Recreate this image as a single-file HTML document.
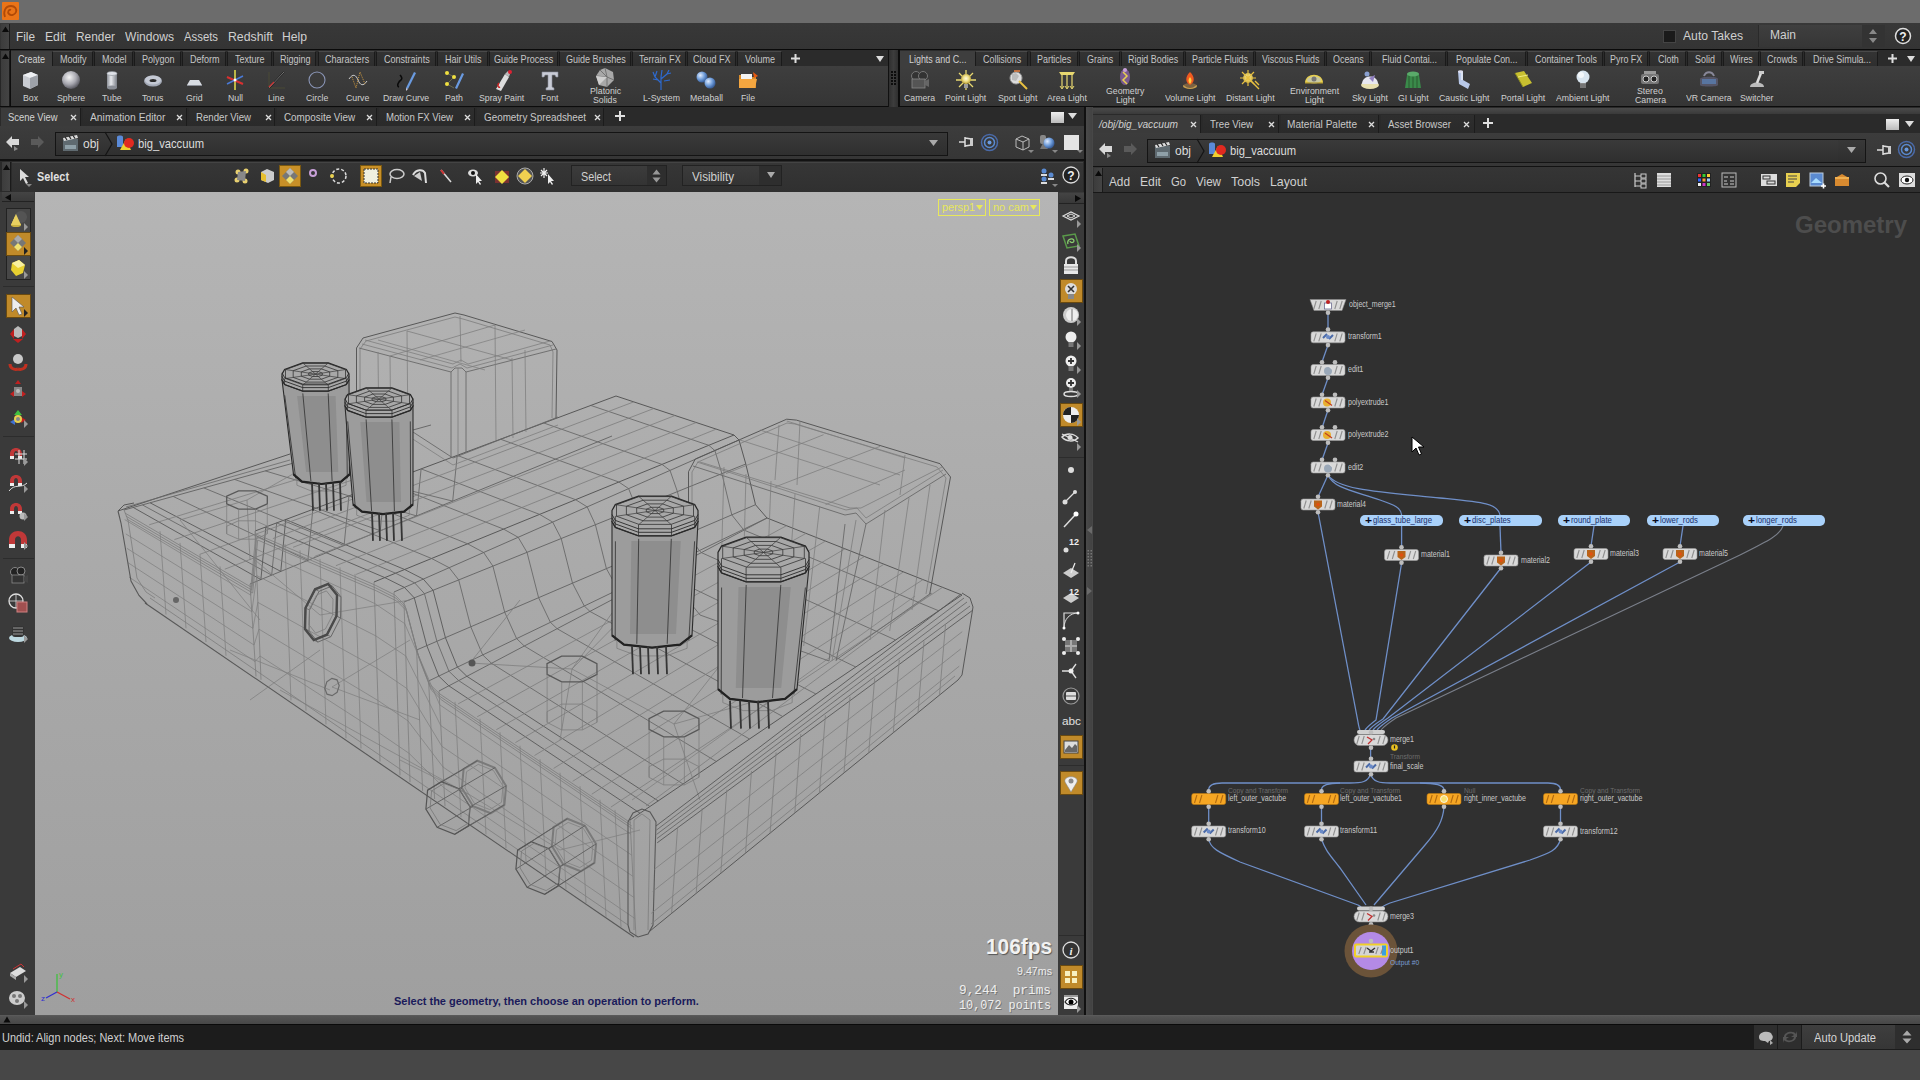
<!DOCTYPE html>
<html><head><meta charset="utf-8">
<style>
*{margin:0;padding:0;box-sizing:border-box}
html,body{width:1920px;height:1080px;overflow:hidden;background:#474747;font-family:"Liberation Sans",sans-serif;color:#cfcfcf}
.a{position:absolute}
.t{position:absolute;white-space:pre;line-height:1}
svg.a{overflow:visible}
</style></head><body>

<div class="a" style="left:0px;top:0px;width:1920px;height:23px;background:#6c6c6c;"></div>
<div class="a" style="left:2px;top:2px;width:17px;height:18px;background:#ea7418;border-radius:1px"></div><svg class="a" style="left:2px;top:2px" width="17" height="18" viewBox="0 0 17 18"><path d="M3 15 C1 10,3 4,9 4 C13 4,15 7,14 10 C13 13,9 14,7 12 C5 10,7 7,9 8" fill="none" stroke="#b04a08" stroke-width="1.8"/></svg>
<div class="a" style="left:0px;top:23px;width:1920px;height:26px;background:linear-gradient(#383838,#343434);"></div>
<div class="a" style="left:0px;top:49px;width:1920px;height:2px;background:#0a0a0a;"></div>
<div class="a" style="left:1px;top:24px;width:9px;height:25px;background:linear-gradient(90deg,#3c3c3c,#444);border-right:1px solid #1a1a1a"></div><svg class="a" style="left:1px;top:26px" width="9" height="7"><path d="M1 6 L4.5 0.5 L8 6Z" fill="#0a0a0a"/></svg>
<div class="t" style="left:16.0px;top:30.0px;font-size:13px;color:#d0d0d0;transform:scaleX(0.907);transform-origin:0 0;">File</div>
<div class="t" style="left:45.0px;top:30.0px;font-size:13px;color:#d0d0d0;transform:scaleX(0.937);transform-origin:0 0;">Edit</div>
<div class="t" style="left:76.0px;top:30.0px;font-size:13px;color:#d0d0d0;transform:scaleX(0.915);transform-origin:0 0;">Render</div>
<div class="t" style="left:125.0px;top:30.0px;font-size:13px;color:#d0d0d0;transform:scaleX(0.929);transform-origin:0 0;">Windows</div>
<div class="t" style="left:184.0px;top:30.0px;font-size:13px;color:#d0d0d0;transform:scaleX(0.871);transform-origin:0 0;">Assets</div>
<div class="t" style="left:228.0px;top:30.0px;font-size:13px;color:#d0d0d0;transform:scaleX(0.944);transform-origin:0 0;">Redshift</div>
<div class="t" style="left:282.0px;top:30.0px;font-size:13px;color:#d0d0d0;transform:scaleX(0.935);transform-origin:0 0;">Help</div>
<div class="a" style="left:1663px;top:30px;width:13px;height:13px;background:#1a1a1a;border:1px solid #444"></div>
<div class="t" style="left:1683.0px;top:30.4px;font-size:12.5px;color:#d0d0d0;transform:scaleX(0.974);transform-origin:0 0;">Auto Takes</div>
<div class="a" style="left:1758px;top:25px;width:127px;height:22px;background:linear-gradient(#3f3f3f,#363636);border-left:1px solid #2a2a2a"></div>
<div class="a" style="left:1862px;top:25px;width:23px;height:22px;background:#333;"></div>
<div class="t" style="left:1770.0px;top:29.4px;font-size:12.5px;color:#d0d0d0;transform:scaleX(0.960);transform-origin:0 0;">Main</div>
<svg class="a" style="left:1868px;top:28px" width="10" height="16"><path d="M1 6 L5 1 L9 6Z M1 10 L5 15 L9 10Z" fill="#888"/></svg>
<svg class="a" style="left:1894px;top:27px" width="18" height="18"><circle cx="9" cy="9" r="7.5" fill="#222" stroke="#ddd" stroke-width="1.5"/><text x="9" y="13.5" font-size="12" font-weight="bold" text-anchor="middle" fill="#eee" font-family="Liberation Sans">?</text></svg>
<div class="a" style="left:0px;top:50px;width:1920px;height:57px;background:#262626;"></div>
<div class="a" style="left:0px;top:106px;width:1920px;height:1px;background:#0c0c0c;"></div>
<div class="a" style="left:1px;top:51px;width:9px;height:55px;background:linear-gradient(90deg,#3c3c3c,#444);border-right:1px solid #1a1a1a"></div><svg class="a" style="left:1px;top:53px" width="9" height="7"><path d="M1 6 L4.5 0.5 L8 6Z" fill="#0a0a0a"/></svg>
<div class="a" style="left:10px;top:50px;width:1px;height:56px;background:#0c0c0c;"></div>
<div class="a" style="left:11px;top:66px;width:877px;height:40px;background:linear-gradient(#3e3e3e,#353535);"></div>
<div class="a" style="left:11px;top:50px;width:877px;height:16px;background:#2b2b2b;"></div>
<div class="a" style="left:11px;top:51px;width:41px;height:16px;background:#3e3e3e;"></div>
<div class="t" style="left:17.9px;top:54.1px;font-size:10.5px;color:#d2d2d2;transform:scaleX(0.860);transform-origin:0 0;">Create</div>
<div class="a" style="left:52px;top:51px;width:41px;height:15px;background:linear-gradient(#333,#2e2e2e);border:1px solid #1a1a1a;border-top:1px solid #4a4a4a;border-bottom:none"></div>
<div class="t" style="left:59.7px;top:54.1px;font-size:10.5px;color:#c6c6c6;transform:scaleX(0.860);transform-origin:0 0;">Modify</div>
<div class="a" style="left:94px;top:51px;width:39px;height:15px;background:linear-gradient(#333,#2e2e2e);border:1px solid #1a1a1a;border-top:1px solid #4a4a4a;border-bottom:none"></div>
<div class="t" style="left:101.7px;top:54.1px;font-size:10.5px;color:#c6c6c6;transform:scaleX(0.860);transform-origin:0 0;">Model</div>
<div class="a" style="left:134px;top:51px;width:47px;height:15px;background:linear-gradient(#333,#2e2e2e);border:1px solid #1a1a1a;border-top:1px solid #4a4a4a;border-bottom:none"></div>
<div class="t" style="left:141.7px;top:54.1px;font-size:10.5px;color:#c6c6c6;transform:scaleX(0.860);transform-origin:0 0;">Polygon</div>
<div class="a" style="left:182px;top:51px;width:44px;height:15px;background:linear-gradient(#333,#2e2e2e);border:1px solid #1a1a1a;border-top:1px solid #4a4a4a;border-bottom:none"></div>
<div class="t" style="left:189.7px;top:54.1px;font-size:10.5px;color:#c6c6c6;transform:scaleX(0.860);transform-origin:0 0;">Deform</div>
<div class="a" style="left:227px;top:51px;width:45px;height:15px;background:linear-gradient(#333,#2e2e2e);border:1px solid #1a1a1a;border-top:1px solid #4a4a4a;border-bottom:none"></div>
<div class="t" style="left:235.2px;top:54.1px;font-size:10.5px;color:#c6c6c6;transform:scaleX(0.860);transform-origin:0 0;">Texture</div>
<div class="a" style="left:273px;top:51px;width:43px;height:15px;background:linear-gradient(#333,#2e2e2e);border:1px solid #1a1a1a;border-top:1px solid #4a4a4a;border-bottom:none"></div>
<div class="t" style="left:279.7px;top:54.1px;font-size:10.5px;color:#c6c6c6;transform:scaleX(0.860);transform-origin:0 0;">Rigging</div>
<div class="a" style="left:318px;top:51px;width:57px;height:15px;background:linear-gradient(#333,#2e2e2e);border:1px solid #1a1a1a;border-top:1px solid #4a4a4a;border-bottom:none"></div>
<div class="t" style="left:324.9px;top:54.1px;font-size:10.5px;color:#c6c6c6;transform:scaleX(0.860);transform-origin:0 0;">Characters</div>
<div class="a" style="left:376px;top:51px;width:60px;height:15px;background:linear-gradient(#333,#2e2e2e);border:1px solid #1a1a1a;border-top:1px solid #4a4a4a;border-bottom:none"></div>
<div class="t" style="left:383.7px;top:54.1px;font-size:10.5px;color:#c6c6c6;transform:scaleX(0.860);transform-origin:0 0;">Constraints</div>
<div class="a" style="left:437px;top:51px;width:51px;height:15px;background:linear-gradient(#333,#2e2e2e);border:1px solid #1a1a1a;border-top:1px solid #4a4a4a;border-bottom:none"></div>
<div class="t" style="left:444.7px;top:54.1px;font-size:10.5px;color:#c6c6c6;transform:scaleX(0.860);transform-origin:0 0;">Hair Utils</div>
<div class="a" style="left:489px;top:51px;width:69px;height:15px;background:linear-gradient(#333,#2e2e2e);border:1px solid #1a1a1a;border-top:1px solid #4a4a4a;border-bottom:none"></div>
<div class="t" style="left:494.4px;top:54.1px;font-size:10.5px;color:#c6c6c6;transform:scaleX(0.860);transform-origin:0 0;">Guide Process</div>
<div class="a" style="left:559px;top:51px;width:72px;height:15px;background:linear-gradient(#333,#2e2e2e);border:1px solid #1a1a1a;border-top:1px solid #4a4a4a;border-bottom:none"></div>
<div class="t" style="left:565.6px;top:54.1px;font-size:10.5px;color:#c6c6c6;transform:scaleX(0.860);transform-origin:0 0;">Guide Brushes</div>
<div class="a" style="left:632px;top:51px;width:54px;height:15px;background:linear-gradient(#333,#2e2e2e);border:1px solid #1a1a1a;border-top:1px solid #4a4a4a;border-bottom:none"></div>
<div class="t" style="left:638.7px;top:54.1px;font-size:10.5px;color:#c6c6c6;transform:scaleX(0.860);transform-origin:0 0;">Terrain FX</div>
<div class="a" style="left:687px;top:51px;width:49px;height:15px;background:linear-gradient(#333,#2e2e2e);border:1px solid #1a1a1a;border-top:1px solid #4a4a4a;border-bottom:none"></div>
<div class="t" style="left:693.2px;top:54.1px;font-size:10.5px;color:#c6c6c6;transform:scaleX(0.860);transform-origin:0 0;">Cloud FX</div>
<div class="a" style="left:737px;top:51px;width:45px;height:15px;background:linear-gradient(#333,#2e2e2e);border:1px solid #1a1a1a;border-top:1px solid #4a4a4a;border-bottom:none"></div>
<div class="t" style="left:744.9px;top:54.1px;font-size:10.5px;color:#c6c6c6;transform:scaleX(0.860);transform-origin:0 0;">Volume</div>
<svg class="a" style="left:790px;top:53px" width="11" height="11"><path d="M5.5 1V10M1 5.5H10" stroke="#ddd" stroke-width="2"/></svg>
<svg class="a" style="left:875px;top:55px" width="10" height="8"><path d="M1 1H9L5 7Z" fill="#ddd"/></svg>
<div class="a" style="left:888px;top:50px;width:10px;height:57px;background:linear-gradient(90deg,#2f2f2f,#3d3d3d,#2f2f2f);border-left:1px solid #111"></div>
<svg class="a" style="left:890px;top:70px" width="7" height="16"><rect x="1" y="1" width="2" height="2" fill="#0c0c0c"/><rect x="1" y="4" width="2" height="2" fill="#0c0c0c"/><rect x="1" y="7" width="2" height="2" fill="#0c0c0c"/><rect x="1" y="10" width="2" height="2" fill="#0c0c0c"/><rect x="1" y="13" width="2" height="2" fill="#0c0c0c"/><rect x="4" y="1" width="2" height="2" fill="#0c0c0c"/><rect x="4" y="4" width="2" height="2" fill="#0c0c0c"/><rect x="4" y="7" width="2" height="2" fill="#0c0c0c"/><rect x="4" y="10" width="2" height="2" fill="#0c0c0c"/><rect x="4" y="13" width="2" height="2" fill="#0c0c0c"/></svg>
<div class="a" style="left:898px;top:50px;width:2px;height:57px;background:#0c0c0c;"></div>
<div class="a" style="left:900px;top:66px;width:1020px;height:40px;background:linear-gradient(#3e3e3e,#353535);"></div>
<div class="a" style="left:900px;top:50px;width:1020px;height:16px;background:#2b2b2b;"></div>
<div class="a" style="left:900px;top:51px;width:75px;height:16px;background:#3e3e3e;"></div>
<div class="t" style="left:908.7px;top:54.1px;font-size:10.5px;color:#d2d2d2;transform:scaleX(0.850);transform-origin:0 0;">Lights and C...</div>
<div class="a" style="left:975px;top:51px;width:53px;height:15px;background:linear-gradient(#333,#2e2e2e);border:1px solid #1a1a1a;border-top:1px solid #4a4a4a;border-bottom:none"></div>
<div class="t" style="left:982.9px;top:54.1px;font-size:10.5px;color:#c6c6c6;transform:scaleX(0.850);transform-origin:0 0;">Collisions</div>
<div class="a" style="left:1030px;top:51px;width:48px;height:15px;background:linear-gradient(#333,#2e2e2e);border:1px solid #1a1a1a;border-top:1px solid #4a4a4a;border-bottom:none"></div>
<div class="t" style="left:1037.4px;top:54.1px;font-size:10.5px;color:#c6c6c6;transform:scaleX(0.850);transform-origin:0 0;">Particles</div>
<div class="a" style="left:1079px;top:51px;width:41px;height:15px;background:linear-gradient(#333,#2e2e2e);border:1px solid #1a1a1a;border-top:1px solid #4a4a4a;border-bottom:none"></div>
<div class="t" style="left:1086.9px;top:54.1px;font-size:10.5px;color:#c6c6c6;transform:scaleX(0.850);transform-origin:0 0;">Grains</div>
<div class="a" style="left:1121px;top:51px;width:63px;height:15px;background:linear-gradient(#333,#2e2e2e);border:1px solid #1a1a1a;border-top:1px solid #4a4a4a;border-bottom:none"></div>
<div class="t" style="left:1127.9px;top:54.1px;font-size:10.5px;color:#c6c6c6;transform:scaleX(0.850);transform-origin:0 0;">Rigid Bodies</div>
<div class="a" style="left:1185px;top:51px;width:69px;height:15px;background:linear-gradient(#333,#2e2e2e);border:1px solid #1a1a1a;border-top:1px solid #4a4a4a;border-bottom:none"></div>
<div class="t" style="left:1192.0px;top:54.1px;font-size:10.5px;color:#c6c6c6;transform:scaleX(0.850);transform-origin:0 0;">Particle Fluids</div>
<div class="a" style="left:1255px;top:51px;width:70px;height:15px;background:linear-gradient(#333,#2e2e2e);border:1px solid #1a1a1a;border-top:1px solid #4a4a4a;border-bottom:none"></div>
<div class="t" style="left:1261.8px;top:54.1px;font-size:10.5px;color:#c6c6c6;transform:scaleX(0.850);transform-origin:0 0;">Viscous Fluids</div>
<div class="a" style="left:1326px;top:51px;width:44px;height:15px;background:linear-gradient(#333,#2e2e2e);border:1px solid #1a1a1a;border-top:1px solid #4a4a4a;border-bottom:none"></div>
<div class="t" style="left:1333.1px;top:54.1px;font-size:10.5px;color:#c6c6c6;transform:scaleX(0.850);transform-origin:0 0;">Oceans</div>
<div class="a" style="left:1371px;top:51px;width:75px;height:15px;background:linear-gradient(#333,#2e2e2e);border:1px solid #1a1a1a;border-top:1px solid #4a4a4a;border-bottom:none"></div>
<div class="t" style="left:1381.5px;top:54.1px;font-size:10.5px;color:#c6c6c6;transform:scaleX(0.850);transform-origin:0 0;">Fluid Contai...</div>
<div class="a" style="left:1447px;top:51px;width:79px;height:15px;background:linear-gradient(#333,#2e2e2e);border:1px solid #1a1a1a;border-top:1px solid #4a4a4a;border-bottom:none"></div>
<div class="t" style="left:1456.2px;top:54.1px;font-size:10.5px;color:#c6c6c6;transform:scaleX(0.850);transform-origin:0 0;">Populate Con...</div>
<div class="a" style="left:1527px;top:51px;width:76px;height:15px;background:linear-gradient(#333,#2e2e2e);border:1px solid #1a1a1a;border-top:1px solid #4a4a4a;border-bottom:none"></div>
<div class="t" style="left:1534.6px;top:54.1px;font-size:10.5px;color:#c6c6c6;transform:scaleX(0.850);transform-origin:0 0;">Container Tools</div>
<div class="a" style="left:1604px;top:51px;width:44px;height:15px;background:linear-gradient(#333,#2e2e2e);border:1px solid #1a1a1a;border-top:1px solid #4a4a4a;border-bottom:none"></div>
<div class="t" style="left:1610.4px;top:54.1px;font-size:10.5px;color:#c6c6c6;transform:scaleX(0.850);transform-origin:0 0;">Pyro FX</div>
<div class="a" style="left:1649px;top:51px;width:37px;height:15px;background:linear-gradient(#333,#2e2e2e);border:1px solid #1a1a1a;border-top:1px solid #4a4a4a;border-bottom:none"></div>
<div class="t" style="left:1657.6px;top:54.1px;font-size:10.5px;color:#c6c6c6;transform:scaleX(0.850);transform-origin:0 0;">Cloth</div>
<div class="a" style="left:1687px;top:51px;width:35px;height:15px;background:linear-gradient(#333,#2e2e2e);border:1px solid #1a1a1a;border-top:1px solid #4a4a4a;border-bottom:none"></div>
<div class="t" style="left:1695.1px;top:54.1px;font-size:10.5px;color:#c6c6c6;transform:scaleX(0.850);transform-origin:0 0;">Solid</div>
<div class="a" style="left:1723px;top:51px;width:36px;height:15px;background:linear-gradient(#333,#2e2e2e);border:1px solid #1a1a1a;border-top:1px solid #4a4a4a;border-bottom:none"></div>
<div class="t" style="left:1730.1px;top:54.1px;font-size:10.5px;color:#c6c6c6;transform:scaleX(0.850);transform-origin:0 0;">Wires</div>
<div class="a" style="left:1760px;top:51px;width:43px;height:15px;background:linear-gradient(#333,#2e2e2e);border:1px solid #1a1a1a;border-top:1px solid #4a4a4a;border-bottom:none"></div>
<div class="t" style="left:1766.9px;top:54.1px;font-size:10.5px;color:#c6c6c6;transform:scaleX(0.850);transform-origin:0 0;">Crowds</div>
<div class="a" style="left:1804px;top:51px;width:74px;height:15px;background:linear-gradient(#333,#2e2e2e);border:1px solid #1a1a1a;border-top:1px solid #4a4a4a;border-bottom:none"></div>
<div class="t" style="left:1812.5px;top:54.1px;font-size:10.5px;color:#c6c6c6;transform:scaleX(0.850);transform-origin:0 0;">Drive Simula...</div>
<svg class="a" style="left:1887px;top:53px" width="11" height="11"><path d="M5.5 1V10M1 5.5H10" stroke="#ddd" stroke-width="2"/></svg>
<svg class="a" style="left:1906px;top:55px" width="10" height="8"><path d="M1 1H9L5 7Z" fill="#ddd"/></svg>
<svg width="0" height="0" style="position:absolute"><defs>
<radialGradient id="gsph" cx="40%" cy="35%" r="65%"><stop offset="0" stop-color="#f4f4f4"/><stop offset="0.6" stop-color="#a8a8b0"/><stop offset="1" stop-color="#5a5a62"/></radialGradient>
<linearGradient id="gcyl" x1="0" x2="1"><stop offset="0" stop-color="#8a8e96"/><stop offset="0.4" stop-color="#e8eaee"/><stop offset="1" stop-color="#7a7e86"/></linearGradient>
<radialGradient id="gblue" cx="35%" cy="35%" r="65%"><stop offset="0" stop-color="#e0ecff"/><stop offset="0.6" stop-color="#6c9ad8"/><stop offset="1" stop-color="#3a5f9a"/></radialGradient>
<radialGradient id="gyel" cx="50%" cy="45%" r="55%"><stop offset="0" stop-color="#fffbe0"/><stop offset="0.5" stop-color="#efe08a"/><stop offset="1" stop-color="#b79b30"/></radialGradient>
</defs></svg>
<svg class="a" style="left:19px;top:69px" width="22" height="22" viewBox="0 0 22 22"><path d="M4 6 L12 3 L19 6 L19 16 L11 20 L4 17Z" fill="#c9ccd2"/><path d="M4 6 L12 3 L19 6 L11 9Z" fill="#eef0f3"/><path d="M11 9 L19 6 L19 16 L11 20Z" fill="#9da1a8"/></svg>
<div class="t" style="left:22.5px;top:93.0px;font-size:9.5px;color:#d0d0d0;transform:scaleX(0.920);transform-origin:0 0;">Box</div>
<svg class="a" style="left:60px;top:69px" width="22" height="22" viewBox="0 0 22 22"><circle cx="11" cy="11" r="9" fill="url(#gsph)"/></svg>
<div class="t" style="left:56.9px;top:93.0px;font-size:9.5px;color:#d0d0d0;transform:scaleX(0.920);transform-origin:0 0;">Sphere</div>
<svg class="a" style="left:101px;top:69px" width="22" height="22" viewBox="0 0 22 22"><rect x="6" y="4" width="10" height="15" rx="1" fill="url(#gcyl)"/><ellipse cx="11" cy="4.5" rx="5" ry="2" fill="#dfe2e8" stroke="#8a8e96" stroke-width="0.6"/><ellipse cx="11" cy="18.5" rx="5" ry="2" fill="#8a8e96"/></svg>
<div class="t" style="left:102.2px;top:93.0px;font-size:9.5px;color:#d0d0d0;transform:scaleX(0.920);transform-origin:0 0;">Tube</div>
<svg class="a" style="left:142px;top:69px" width="22" height="22" viewBox="0 0 22 22"><ellipse cx="11" cy="12" rx="9" ry="5.5" fill="#a3a9b6"/><ellipse cx="11" cy="11" rx="8" ry="4.5" fill="#c4c9d4"/><ellipse cx="11" cy="11.5" rx="3.5" ry="1.6" fill="#2a2a2a"/></svg>
<div class="t" style="left:142.3px;top:93.0px;font-size:9.5px;color:#d0d0d0;transform:scaleX(0.920);transform-origin:0 0;">Torus</div>
<svg class="a" style="left:183px;top:69px" width="22" height="22" viewBox="0 0 22 22"><path d="M4 16 L7 11 L16 11 L19 16Z" fill="#d8dce2"/><path d="M4 16 L19 16 L19 17 L4 17Z" fill="#8a8e96"/></svg>
<div class="t" style="left:185.7px;top:93.0px;font-size:9.5px;color:#d0d0d0;transform:scaleX(0.920);transform-origin:0 0;">Grid</div>
<svg class="a" style="left:224px;top:69px" width="22" height="22" viewBox="0 0 22 22"><path d="M11 1V21" stroke="#e8e04a" stroke-width="1.5"/><path d="M3 8 L19 15" stroke="#d83030" stroke-width="2"/><path d="M3 15 L19 7" stroke="#4a7ad8" stroke-width="1.5"/><circle cx="11" cy="11" r="1.5" fill="#fff"/></svg>
<div class="t" style="left:227.5px;top:93.0px;font-size:9.5px;color:#d0d0d0;transform:scaleX(0.920);transform-origin:0 0;">Null</div>
<svg class="a" style="left:265px;top:69px" width="22" height="22" viewBox="0 0 22 22"><path d="M4 19 H20 M4 19 V3" stroke="#553" stroke-width="0.6"/><path d="M4 19 L19 3" stroke="#111" stroke-width="1.6"/><path d="M4 19 L19 3" stroke="#ddd" stroke-width="0.5"/><path d="M4 18 L9 13" stroke="#c33" stroke-width="1.2"/></svg>
<div class="t" style="left:267.7px;top:93.0px;font-size:9.5px;color:#d0d0d0;transform:scaleX(0.920);transform-origin:0 0;">Line</div>
<svg class="a" style="left:306px;top:69px" width="22" height="22" viewBox="0 0 22 22"><circle cx="11" cy="11" r="8" fill="none" stroke="#8a95b6" stroke-width="1.1"/></svg>
<div class="t" style="left:305.8px;top:93.0px;font-size:9.5px;color:#d0d0d0;transform:scaleX(0.920);transform-origin:0 0;">Circle</div>
<svg class="a" style="left:347px;top:69px" width="22" height="22" viewBox="0 0 22 22"><path d="M2 10 C6 4,9 6,11 11 C13 16,16 18,20 12" fill="none" stroke="#ccc" stroke-width="1"/><path d="M5 8 L9 19 L13 3 L18 15" fill="none" stroke="#d9a040" stroke-width="0.9" stroke-dasharray="1 1"/></svg>
<div class="t" style="left:346.3px;top:93.0px;font-size:9.5px;color:#d0d0d0;transform:scaleX(0.920);transform-origin:0 0;">Curve</div>
<svg class="a" style="left:395px;top:69px" width="22" height="22" viewBox="0 0 22 22"><path d="M4 18 C1 17,4 12,6 11 C8 10,6 7,5 6" fill="none" stroke="#0a0a0a" stroke-width="1.6"/><path d="M11 19 L19 3 L21 4 L13 20Z" fill="#6a9ae0"/><path d="M11 19 L13 20 L11 22Z" fill="#ccd"/></svg>
<div class="t" style="left:382.9px;top:93.0px;font-size:9.5px;color:#d0d0d0;transform:scaleX(0.920);transform-origin:0 0;">Draw Curve</div>
<svg class="a" style="left:443px;top:69px" width="22" height="22" viewBox="0 0 22 22"><path d="M4 4 L11 8 L4 15 L11 19" fill="none" stroke="#775" stroke-width="0.8"/><circle cx="4" cy="4" r="2" fill="#f0e040"/><circle cx="11" cy="8" r="2" fill="#f0e040"/><circle cx="4" cy="15" r="2" fill="#f0e040"/><path d="M12 19 L19 4 L21 5 L14 20Z" fill="#6a9ae0"/></svg>
<div class="t" style="left:445.0px;top:93.0px;font-size:9.5px;color:#d0d0d0;transform:scaleX(0.920);transform-origin:0 0;">Path</div>
<svg class="a" style="left:491px;top:69px" width="22" height="22" viewBox="0 0 22 22"><path d="M5 20 L14 5 L18 8 L10 22Z" fill="#ddd"/><path d="M8 14 C6 16,7 19,9 18" fill="none" stroke="#c22" stroke-width="1.5"/><path d="M14 5 L17 2 L19 5 L18 8Z" fill="#bbb"/><circle cx="19" cy="3" r="2" fill="#d23"/></svg>
<div class="t" style="left:479.4px;top:93.0px;font-size:9.5px;color:#d0d0d0;transform:scaleX(0.920);transform-origin:0 0;">Spray Paint</div>
<svg class="a" style="left:539px;top:69px" width="22" height="22" viewBox="0 0 22 22"><path d="M3 3 H19 V8 H17 L16 6 H13 V18 L15 19 V21 H7 V19 L9 18 V6 H6 L5 8 H3Z" fill="#c9ccd6" stroke="#8a8e9a" stroke-width="0.6"/></svg>
<div class="t" style="left:541.3px;top:93.0px;font-size:9.5px;color:#d0d0d0;transform:scaleX(0.920);transform-origin:0 0;">Font</div>
<svg class="a" style="left:594px;top:67px" width="22" height="22" viewBox="0 0 22 22"><path d="M11 1 L19 5 L20 13 L13 20 L5 18 L2 9 L6 3Z" fill="#a8a8a8"/><path d="M11 1 L13 10 L2 9 M13 10 L20 13 M13 10 L13 20 M6 3 L13 10" stroke="#666" stroke-width="0.8" fill="none"/><path d="M2 9 L13 10 L5 18Z" fill="#cfcfcf"/></svg>
<div class="t" style="left:589.5px;top:86.0px;font-size:9.5px;color:#d0d0d0;transform:scaleX(0.920);transform-origin:0 0;">Platonic</div>
<div class="t" style="left:593.1px;top:95.0px;font-size:9.5px;color:#d0d0d0;transform:scaleX(0.920);transform-origin:0 0;">Solids</div>
<svg class="a" style="left:650px;top:69px" width="22" height="22" viewBox="0 0 22 22"><path d="M11 21 V8 M11 14 L5 8 L3 3 M5 8 L7 2 M11 10 L17 5 L19 1 M17 5 L21 4 M11 8 L12 1 M8 11 L3 10 M14 12 L20 11" fill="none" stroke="#2d6ad0" stroke-width="1.2"/></svg>
<div class="t" style="left:642.5px;top:93.0px;font-size:9.5px;color:#d0d0d0;transform:scaleX(0.920);transform-origin:0 0;">L-System</div>
<svg class="a" style="left:695px;top:69px" width="22" height="22" viewBox="0 0 22 22"><circle cx="7" cy="8" r="5.5" fill="url(#gblue)"/><circle cx="15" cy="14" r="5.5" fill="url(#gblue)"/></svg>
<div class="t" style="left:689.5px;top:93.0px;font-size:9.5px;color:#d0d0d0;transform:scaleX(0.920);transform-origin:0 0;">Metaball</div>
<svg class="a" style="left:737px;top:69px" width="22" height="22" viewBox="0 0 22 22"><path d="M2 6 H9 L11 8 H19 V19 H2Z" fill="#d98c2c"/><path d="M4 5 H15 V15 H4Z" fill="#f2f2f2"/><path d="M2 10 H20 L18 19 H2Z" fill="#f4a640"/><path d="M16 3 L21 7 L17 9Z" fill="#e85a10"/></svg>
<div class="t" style="left:741.0px;top:93.0px;font-size:9.5px;color:#d0d0d0;transform:scaleX(0.920);transform-origin:0 0;">File</div>
<svg class="a" style="left:908px;top:69px" width="22" height="22" viewBox="0 0 22 22"><circle cx="8" cy="7" r="4.5" fill="#333" stroke="#777" stroke-width="1"/><circle cx="15" cy="7" r="4.5" fill="#333" stroke="#777" stroke-width="1"/><rect x="4" y="10" width="13" height="9" fill="#555" stroke="#888" stroke-width="0.8"/><path d="M17 12 L21 10 V18 L17 16Z" fill="#666"/></svg>
<div class="t" style="left:903.5px;top:93.0px;font-size:9.5px;color:#d0d0d0;transform:scaleX(0.920);transform-origin:0 0;">Camera</div>
<svg class="a" style="left:955px;top:69px" width="22" height="22" viewBox="0 0 22 22"><path d="M11 1 V21 M1 11 H21 M4 4 L18 18 M18 4 L4 18" stroke="#e8d870" stroke-width="1.3"/><circle cx="11" cy="10" r="5" fill="url(#gyel)"/><rect x="9" y="15" width="4" height="4" fill="#999"/></svg>
<div class="t" style="left:945.3px;top:93.0px;font-size:9.5px;color:#d0d0d0;transform:scaleX(0.920);transform-origin:0 0;">Point Light</div>
<svg class="a" style="left:1007px;top:69px" width="22" height="22" viewBox="0 0 22 22"><circle cx="9" cy="9" r="6" fill="#ddd" stroke="#999"/><path d="M5 5 L9 4 L12 7 L9 12 L5 11Z" fill="#bbb"/><path d="M12 12 L20 20" stroke="#e8c040" stroke-width="2"/><path d="M7 2 L13 2" stroke="#e88040" stroke-width="1.5"/></svg>
<div class="t" style="left:998.3px;top:93.0px;font-size:9.5px;color:#d0d0d0;transform:scaleX(0.920);transform-origin:0 0;">Spot Light</div>
<svg class="a" style="left:1056px;top:69px" width="22" height="22" viewBox="0 0 22 22"><path d="M3 3 H19 L17 6 H5Z" fill="#e8d870"/><path d="M6 6 V19 M11 6 V19 M16 6 V19" stroke="#e8d870" stroke-width="1.2"/><path d="M4 17 L6 20 L8 17 M9 17 L11 20 L13 17 M14 17 L16 20 L18 17" fill="none" stroke="#e8d870" stroke-width="1"/></svg>
<div class="t" style="left:1047.1px;top:93.0px;font-size:9.5px;color:#d0d0d0;transform:scaleX(0.920);transform-origin:0 0;">Area Light</div>
<svg class="a" style="left:1114px;top:67px" width="22" height="22" viewBox="0 0 22 22"><ellipse cx="11" cy="10" rx="5" ry="8" fill="#7a5a90"/><path d="M9 5 L13 9 L9 13 L13 17" stroke="#e8d050" stroke-width="1.5" fill="none"/><circle cx="11" cy="3" r="2" fill="#c8a0d8"/></svg>
<div class="t" style="left:1105.8px;top:86.0px;font-size:9.5px;color:#d0d0d0;transform:scaleX(0.920);transform-origin:0 0;">Geometry</div>
<div class="t" style="left:1115.5px;top:95.0px;font-size:9.5px;color:#d0d0d0;transform:scaleX(0.920);transform-origin:0 0;">Light</div>
<svg class="a" style="left:1179px;top:69px" width="22" height="22" viewBox="0 0 22 22"><ellipse cx="11" cy="17" rx="7" ry="3" fill="#c8a050"/><circle cx="11" cy="11" r="8" fill="#4a3a3a" opacity="0.6"/><path d="M11 3 C16 8,16 13,11 16 C6 13,6 8,11 3Z" fill="#f05a20"/><path d="M11 8 C13 10,13 13,11 15 C9 13,9 10,11 8Z" fill="#ffd040"/></svg>
<div class="t" style="left:1164.7px;top:93.0px;font-size:9.5px;color:#d0d0d0;transform:scaleX(0.920);transform-origin:0 0;">Volume Light</div>
<svg class="a" style="left:1239px;top:69px" width="22" height="22" viewBox="0 0 22 22"><circle cx="9" cy="9" r="5" fill="url(#gyel)"/><path d="M9 1 V17 M1 9 H17 M3 3 L15 15 M15 3 L3 15" stroke="#e8c040" stroke-width="1.2"/><path d="M12 12 L20 20 M16 12 L20 16" stroke="#e8c040" stroke-width="1.4"/></svg>
<div class="t" style="left:1225.7px;top:93.0px;font-size:9.5px;color:#d0d0d0;transform:scaleX(0.920);transform-origin:0 0;">Distant Light</div>
<svg class="a" style="left:1303px;top:67px" width="22" height="22" viewBox="0 0 22 22"><path d="M2 16 C2 5,20 5,20 16Z" fill="#e8d050"/><ellipse cx="11" cy="13" rx="7" ry="3.5" fill="#c8c8a0"/><circle cx="11" cy="12" r="2.5" fill="#777"/><path d="M2 16 H20" stroke="#a89030" stroke-width="1.2"/></svg>
<div class="t" style="left:1289.5px;top:86.0px;font-size:9.5px;color:#d0d0d0;transform:scaleX(0.920);transform-origin:0 0;">Environment</div>
<div class="t" style="left:1304.5px;top:95.0px;font-size:9.5px;color:#d0d0d0;transform:scaleX(0.920);transform-origin:0 0;">Light</div>
<svg class="a" style="left:1359px;top:69px" width="22" height="22" viewBox="0 0 22 22"><ellipse cx="11" cy="16" rx="9" ry="4" fill="#e8e0b0"/><path d="M3 15 C3 5,19 5,19 15Z" fill="#e8e8f0"/><path d="M10 9 L16 6 L14 13Z" fill="#9080c0"/><circle cx="8" cy="5" r="2.5" fill="#8aa0d0"/></svg>
<div class="t" style="left:1352.0px;top:93.0px;font-size:9.5px;color:#d0d0d0;transform:scaleX(0.920);transform-origin:0 0;">Sky Light</div>
<svg class="a" style="left:1402px;top:69px" width="22" height="22" viewBox="0 0 22 22"><path d="M5 6 C5 2,17 2,17 6 L19 19 H3Z" fill="#3a8a4a"/><path d="M7 6 V19 M11 5 V19 M15 6 V19" stroke="#2a5a30" stroke-width="1"/><ellipse cx="11" cy="5" rx="6" ry="2.5" fill="#5aaa6a"/></svg>
<div class="t" style="left:1397.7px;top:93.0px;font-size:9.5px;color:#d0d0d0;transform:scaleX(0.920);transform-origin:0 0;">GI Light</div>
<svg class="a" style="left:1453px;top:69px" width="22" height="22" viewBox="0 0 22 22"><path d="M5 2 H10 V11 L17 15 L15 20 L6 15 Z" fill="#b8c8e8"/><path d="M6 3 H9 V11" stroke="#fff" stroke-width="1" fill="none"/><ellipse cx="7.5" cy="2.5" rx="2.5" ry="1.2" fill="#dde"/></svg>
<div class="t" style="left:1438.7px;top:93.0px;font-size:9.5px;color:#d0d0d0;transform:scaleX(0.920);transform-origin:0 0;">Caustic Light</div>
<svg class="a" style="left:1512px;top:69px" width="22" height="22" viewBox="0 0 22 22"><path d="M3 4 L12 2 L20 14 L11 18Z" fill="#c8c030"/><path d="M3 4 L11 18" stroke="#8a8a20" stroke-width="1"/><path d="M6 8 L16 6" stroke="#eeea80" stroke-width="1"/></svg>
<div class="t" style="left:1500.9px;top:93.0px;font-size:9.5px;color:#d0d0d0;transform:scaleX(0.920);transform-origin:0 0;">Portal Light</div>
<svg class="a" style="left:1572px;top:69px" width="22" height="22" viewBox="0 0 22 22"><circle cx="11" cy="8" r="6.5" fill="#d8e4ee"/><circle cx="9" cy="6" r="3" fill="#fff" opacity="0.7"/><rect x="8" y="14" width="6" height="5" fill="#888"/><path d="M8 16 H14 M8 18 H14" stroke="#555" stroke-width="0.7"/></svg>
<div class="t" style="left:1556.3px;top:93.0px;font-size:9.5px;color:#d0d0d0;transform:scaleX(0.920);transform-origin:0 0;">Ambient Light</div>
<svg class="a" style="left:1639px;top:67px" width="22" height="22" viewBox="0 0 22 22"><rect x="2" y="7" width="18" height="10" rx="2" fill="#777"/><circle cx="7" cy="12" r="3" fill="#222" stroke="#ccc"/><circle cx="15" cy="12" r="3" fill="#222" stroke="#ccc"/><rect x="5" y="4" width="12" height="3" fill="#999"/></svg>
<div class="t" style="left:1637.1px;top:86.0px;font-size:9.5px;color:#d0d0d0;transform:scaleX(0.920);transform-origin:0 0;">Stereo</div>
<div class="t" style="left:1634.5px;top:95.0px;font-size:9.5px;color:#d0d0d0;transform:scaleX(0.920);transform-origin:0 0;">Camera</div>
<svg class="a" style="left:1698px;top:69px" width="22" height="22" viewBox="0 0 22 22"><path d="M2 10 C2 7,20 7,20 10 V16 C20 18,2 18,2 16Z" fill="#556"/><rect x="4" y="10" width="14" height="5" fill="#5a8ac8" opacity="0.6"/><path d="M6 7 C8 2,14 2,16 7" fill="none" stroke="#889" stroke-width="2"/></svg>
<div class="t" style="left:1686.2px;top:93.0px;font-size:9.5px;color:#d0d0d0;transform:scaleX(0.920);transform-origin:0 0;">VR Camera</div>
<svg class="a" style="left:1746px;top:69px" width="22" height="22" viewBox="0 0 22 22"><path d="M4 18 C4 12,18 12,18 18Z" fill="#bbb"/><path d="M11 14 L15 4" stroke="#ddd" stroke-width="2.5"/><rect x="13" y="2" width="5" height="3" fill="#ccc"/></svg>
<div class="t" style="left:1740.2px;top:93.0px;font-size:9.5px;color:#d0d0d0;transform:scaleX(0.920);transform-origin:0 0;">Switcher</div>
<div class="a" style="left:0px;top:107px;width:1085px;height:19px;background:#2a2a2a;"></div>
<div class="a" style="left:1px;top:108px;width:80px;height:18px;background:#3b3b3b;border-right:1px solid #1c1c1c"></div>
<div class="t" style="left:7.5px;top:111.8px;font-size:11.5px;color:#d4d4d4;transform:scaleX(0.818);transform-origin:0 0;">Scene View</div>
<svg class="a" style="left:70px;top:114px" width="7" height="7" viewBox="0 0 7 7"><path d="M1 1L6 6M6 1L1 6" stroke="#ddd" stroke-width="1.3"/></svg>
<div class="a" style="left:83px;top:108px;width:104px;height:18px;background:linear-gradient(#2e2e2e,#2a2a2a);border-right:1px solid #1c1c1c"></div>
<div class="t" style="left:90.0px;top:111.8px;font-size:11.5px;color:#c8c8c8;transform:scaleX(0.895);transform-origin:0 0;">Animation Editor</div>
<svg class="a" style="left:176px;top:114px" width="7" height="7" viewBox="0 0 7 7"><path d="M1 1L6 6M6 1L1 6" stroke="#ddd" stroke-width="1.3"/></svg>
<div class="a" style="left:189px;top:108px;width:86px;height:18px;background:linear-gradient(#2e2e2e,#2a2a2a);border-right:1px solid #1c1c1c"></div>
<div class="t" style="left:196.0px;top:111.8px;font-size:11.5px;color:#c8c8c8;transform:scaleX(0.838);transform-origin:0 0;">Render View</div>
<svg class="a" style="left:265px;top:114px" width="7" height="7" viewBox="0 0 7 7"><path d="M1 1L6 6M6 1L1 6" stroke="#ddd" stroke-width="1.3"/></svg>
<div class="a" style="left:277px;top:108px;width:100px;height:18px;background:linear-gradient(#2e2e2e,#2a2a2a);border-right:1px solid #1c1c1c"></div>
<div class="t" style="left:284.0px;top:111.8px;font-size:11.5px;color:#c8c8c8;transform:scaleX(0.857);transform-origin:0 0;">Composite View</div>
<svg class="a" style="left:366px;top:114px" width="7" height="7" viewBox="0 0 7 7"><path d="M1 1L6 6M6 1L1 6" stroke="#ddd" stroke-width="1.3"/></svg>
<div class="a" style="left:379px;top:108px;width:96px;height:18px;background:linear-gradient(#2e2e2e,#2a2a2a);border-right:1px solid #1c1c1c"></div>
<div class="t" style="left:386.0px;top:111.8px;font-size:11.5px;color:#c8c8c8;transform:scaleX(0.834);transform-origin:0 0;">Motion FX View</div>
<svg class="a" style="left:464px;top:114px" width="7" height="7" viewBox="0 0 7 7"><path d="M1 1L6 6M6 1L1 6" stroke="#ddd" stroke-width="1.3"/></svg>
<div class="a" style="left:477px;top:108px;width:127px;height:18px;background:linear-gradient(#2e2e2e,#2a2a2a);border-right:1px solid #1c1c1c"></div>
<div class="t" style="left:484.0px;top:111.8px;font-size:11.5px;color:#c8c8c8;transform:scaleX(0.858);transform-origin:0 0;">Geometry Spreadsheet</div>
<svg class="a" style="left:594px;top:114px" width="7" height="7" viewBox="0 0 7 7"><path d="M1 1L6 6M6 1L1 6" stroke="#ddd" stroke-width="1.3"/></svg>
<svg class="a" style="left:614px;top:110px" width="12" height="12" viewBox="0 0 12 12"><path d="M6 1V11M1 6H11" stroke="#e0e0e0" stroke-width="2"/></svg>
<div class="a" style="left:1051px;top:112px;width:13px;height:11px;background:linear-gradient(#eee,#bbb);"></div>
<svg class="a" style="left:1068px;top:113px" width="9" height="7" viewBox="0 0 9 7"><path d="M0 0H9L4.5 6Z" fill="#ddd"/></svg>
<div class="a" style="left:0px;top:126px;width:1085px;height:33px;background:linear-gradient(#3c3c3c,#363636);"></div>
<svg class="a" style="left:5px;top:135px" width="22" height="16" viewBox="0 0 22 16"><path d="M1 7 L7 1 V4 H14 V10 H7 V13Z" fill="#d8d8d8"/><path d="M9 11 L13 14 L9 16Z" fill="#888"/></svg><svg class="a" style="left:29px;top:135px" width="16" height="16" viewBox="0 0 16 16"><path d="M15 7 L9 1 V4 H2 V10 H9 V13Z" fill="#5a5a5a"/></svg>
<div class="a" style="left:55px;top:132px;width:893px;height:24px;background:linear-gradient(#3a3a3a,#2f2f2f);border:1px solid #141414"></div>
<svg class="a" style="left:62px;top:135px" width="17" height="17" viewBox="0 0 17 17"><rect x="1" y="4" width="15" height="12" fill="#5f6a70"/><path d="M1 3 L15 0 L16 3 L2 6Z" fill="#dcdcdc"/><path d="M3 2 L5 5 M7 1 L9 4 M11 0.5 L13 3.5" stroke="#222" stroke-width="1.2"/><rect x="3" y="10" width="11" height="4" fill="#8fa0a8"/></svg>
<div class="t" style="left:83.0px;top:137.0px;font-size:13px;color:#dcdcdc;transform:scaleX(0.922);transform-origin:0 0;">obj</div>
<svg class="a" style="left:104px;top:132px" width="10" height="24" viewBox="0 0 10 24"><path d="M1 0 L8 12 L1 24" fill="none" stroke="#141414" stroke-width="1.2"/></svg>
<svg class="a" style="left:115px;top:134px" width="20" height="18" viewBox="0 0 20 18"><path d="M2 3 C2 1,8 1,8 3 V13 H2Z" fill="#5a8ad8"/><path d="M5 16 L11 5 L16 16Z" fill="#f0d030"/><circle cx="14" cy="9" r="5" fill="#e02a20"/></svg>
<div class="t" style="left:138.0px;top:137.0px;font-size:13px;color:#dcdcdc;transform:scaleX(0.862);transform-origin:0 0;">big_vaccuum</div>
<div class="a" style="left:920px;top:133px;width:26px;height:22px;background:linear-gradient(#383838,#2e2e2e);"></div>
<svg class="a" style="left:929px;top:140px" width="9" height="7" viewBox="0 0 9 7"><path d="M0 0H9L4.5 6Z" fill="#aaa"/></svg>
<div class="a" style="left:0px;top:159px;width:1085px;height:2px;background:#121212;"></div>
<svg class="a" style="left:957px;top:133px" width="20" height="18" viewBox="0 0 20 18"><path d="M2 9 H8 M8 4 V14 M8 5 L14 6 V12 L8 13" stroke="#ddd" stroke-width="1.5" fill="none"/><rect x="13" y="5" width="3" height="8" fill="#ccc"/></svg>
<svg class="a" style="left:980px;top:133px" width="19" height="19" viewBox="0 0 19 19"><circle cx="9.5" cy="9.5" r="8" fill="none" stroke="#4a6aa8" stroke-width="1.5"/><circle cx="9.5" cy="9.5" r="5" fill="none" stroke="#5a8ad0" stroke-width="1.5"/><circle cx="9.5" cy="9.5" r="2" fill="#6a9ae0"/></svg>
<svg class="a" style="left:1013px;top:133px" width="22" height="22" viewBox="0 0 22 22"><path d="M3 6 L9 3 L16 6 V14 L10 17 L3 14Z M3 6 L10 9 L16 6 M10 9 V17" fill="none" stroke="#bbb" stroke-width="1"/><path d="M15 17 H21 L18 20Z" fill="#888"/></svg>
<svg class="a" style="left:1037px;top:133px" width="22" height="22" viewBox="0 0 22 22"><rect x="3" y="2" width="6" height="9" rx="2" fill="#888"/><path d="M3 16 L7 8 L11 16Z" fill="#777"/><circle cx="12" cy="10" r="5.5" fill="url(#gblue)"/><path d="M15 17 H21 L18 20Z" fill="#888"/></svg>
<svg class="a" style="left:1062px;top:133px" width="22" height="22" viewBox="0 0 22 22"><rect x="2" y="2" width="15" height="15" fill="#e4e4e4"/><path d="M15 17 H21 L18 20Z" fill="#888"/></svg>
<div class="a" style="left:0px;top:161px;width:1085px;height:31px;background:#2a2a2a;"></div>
<div class="a" style="left:2px;top:162px;width:9px;height:29px;background:linear-gradient(90deg,#3c3c3c,#444);border-right:1px solid #1a1a1a"></div><svg class="a" style="left:2px;top:164px" width="9" height="7"><path d="M1 6 L4.5 0.5 L8 6Z" fill="#0a0a0a"/></svg>
<div class="a" style="left:12px;top:162px;width:1071px;height:30px;background:linear-gradient(#363636,#303030);border-top:1px solid #444"></div>
<svg class="a" style="left:18px;top:168px" width="16" height="18" viewBox="0 0 16 18"><path d="M2 1 L2 13 L5 10 L8 16 L10 15 L7 9 L11 9Z" fill="#ddd"/><path d="M8 16 H14 L11 19Z" fill="#888"/></svg>
<div class="t" style="left:37.0px;top:170.8px;font-size:12px;color:#e0e0e0;font-weight:bold;transform:scaleX(0.905);transform-origin:0 0;">Select</div>
<svg class="a" style="left:233px;top:167px" width="18" height="18" viewBox="0 0 18 18"><circle cx="5" cy="5" r="2.5" fill="#e8d070"/><circle cx="13" cy="4" r="2.5" fill="#e8d070"/><circle cx="4" cy="13" r="2.5" fill="#e8d070"/><circle cx="12" cy="14" r="2.5" fill="#e8d070"/><path d="M5 5 L13 4 L12 14 L4 13Z" fill="#888"/></svg>
<svg class="a" style="left:258px;top:167px" width="18" height="18" viewBox="0 0 18 18"><path d="M3 5 L9 2 L16 5 V13 L10 16 L3 13Z" fill="#ccc"/><path d="M3 5 V13 L8 15 V8Z" fill="#e8c030"/></svg>
<div class="a" style="left:279px;top:165px;width:22px;height:22px;background:#c89028;border:1px solid #7a5810"></div><svg class="a" style="left:281px;top:167px" width="18" height="18" viewBox="0 0 18 18"><path d="M9 1 L17 9 L9 17 L1 9Z" fill="#777"/><path d="M9 9 L13 13 L9 17 L5 13Z" fill="#f0e070"/><path d="M9 1 L13 5 L9 9 L5 5Z" fill="#bbb"/></svg>
<svg class="a" style="left:304px;top:167px" width="18" height="18" viewBox="0 0 18 18"><circle cx="9" cy="6" r="3" fill="none" stroke="#c8a0d8" stroke-width="2"/></svg>
<svg class="a" style="left:330px;top:167px" width="18" height="18" viewBox="0 0 18 18"><circle cx="9" cy="9" r="7" fill="none" stroke="#ddd" stroke-width="1.5" stroke-dasharray="3 2"/><circle cx="2" cy="9" r="2" fill="#e8d050"/></svg>
<div class="a" style="left:360px;top:165px;width:22px;height:22px;background:#c89028;border:1px solid #7a5810"></div><svg class="a" style="left:362px;top:167px" width="18" height="18" viewBox="0 0 18 18"><rect x="2" y="2" width="14" height="14" fill="#f0f0e0" stroke="#333" stroke-dasharray="2 1"/></svg>
<svg class="a" style="left:387px;top:167px" width="18" height="18" viewBox="0 0 18 18"><ellipse cx="10" cy="7" rx="7" ry="4.5" fill="none" stroke="#ccc" stroke-width="1.5"/><path d="M4 10 L3 16" stroke="#ccc" stroke-width="1.5"/></svg>
<svg class="a" style="left:411px;top:167px" width="18" height="18" viewBox="0 0 18 18"><path d="M2 8 C5 2,12 2,14 6 L15 16" fill="none" stroke="#ddd" stroke-width="2"/><path d="M3 9 L9 5 L11 14Z" fill="#ccc"/></svg>
<svg class="a" style="left:437px;top:167px" width="18" height="18" viewBox="0 0 18 18"><path d="M4 3 L14 15" stroke="#ddd" stroke-width="1.5"/><path d="M4 3 L7 7" stroke="#c33" stroke-width="2"/></svg>
<svg class="a" style="left:467px;top:167px" width="18" height="18" viewBox="0 0 18 18"><ellipse cx="6" cy="6" rx="5" ry="3.5" fill="#ddd"/><circle cx="6" cy="6" r="2" fill="#111"/><path d="M9 7 L9 17 L11 15 L13 18 L14 17 L12 14 L15 14Z" fill="#eee"/></svg>
<svg class="a" style="left:493px;top:167px" width="18" height="18" viewBox="0 0 18 18"><rect x="2" y="4" width="14" height="12" fill="#c03030" opacity="0.5"/><path d="M9 3 L16 10 L9 17 L2 10Z" fill="#f0e040"/></svg>
<svg class="a" style="left:516px;top:167px" width="18" height="18" viewBox="0 0 18 18"><circle cx="9" cy="9" r="8" fill="#555" stroke="#aaa"/><path d="M9 2 L16 9 L9 16 L2 9Z" fill="#f0d050"/></svg>
<svg class="a" style="left:539px;top:167px" width="18" height="18" viewBox="0 0 18 18"><path d="M5 1 V11 M1 6 H9 M2 3 L8 9 M8 3 L2 9" stroke="#eee" stroke-width="1.2"/><path d="M9 7 L9 17 L11 15 L13 18 L14 17 L12 14 L15 14Z" fill="#eee"/></svg>
<div class="a" style="left:571px;top:165px;width:96px;height:21px;background:linear-gradient(#3c3c3c,#333);border:1px solid #222"></div>
<div class="a" style="left:647px;top:166px;width:19px;height:19px;background:#2e2e2e;"></div>
<svg class="a" style="left:652px;top:169px" width="9" height="14" viewBox="0 0 9 14"><path d="M0.5 5.5 L4.5 0.5 L8.5 5.5Z M0.5 8.5 L4.5 13.5 L8.5 8.5Z" fill="#999"/></svg>
<div class="t" style="left:581.0px;top:170.8px;font-size:12px;color:#d0d0d0;transform:scaleX(0.899);transform-origin:0 0;">Select</div>
<div class="a" style="left:682px;top:165px;width:100px;height:21px;background:linear-gradient(#3c3c3c,#333);border:1px solid #222"></div>
<div class="a" style="left:759px;top:166px;width:22px;height:19px;background:#2e2e2e;"></div>
<svg class="a" style="left:767px;top:172px" width="8" height="6" viewBox="0 0 8 6"><path d="M0 0H8L4 6Z" fill="#aaa"/></svg>
<div class="t" style="left:692.0px;top:170.8px;font-size:12px;color:#d0d0d0;transform:scaleX(0.974);transform-origin:0 0;">Visibility</div>
<svg class="a" style="left:1040px;top:168px" width="20" height="20" viewBox="0 0 20 20"><circle cx="4" cy="3" r="2.5" fill="#5a8ad0"/><rect x="1" y="6" width="6" height="2" fill="#ddd"/><circle cx="11" cy="7" r="2.5" fill="#5a8ad0"/><rect x="8" y="10" width="6" height="2" fill="#ddd"/><circle cx="4" cy="11" r="2.5" fill="#5a8ad0"/><rect x="1" y="14" width="6" height="2" fill="#ddd"/><path d="M12 16 H18 L15 19Z" fill="#888"/></svg>
<svg class="a" style="left:1061px;top:165px" width="20" height="20" viewBox="0 0 20 20"><circle cx="10" cy="10" r="8" fill="#222" stroke="#ddd" stroke-width="1.3"/><text x="10" y="14.5" font-size="12" font-weight="bold" text-anchor="middle" fill="#eee" font-family="Liberation Sans">?</text></svg>
<div class="a" style="left:0px;top:192px;width:35px;height:823px;background:#3a3a3a;"></div>
<div class="a" style="left:2px;top:192px;width:32px;height:10px;background:linear-gradient(#444,#3a3a3a);border-bottom:1px solid #222"></div>
<svg class="a" style="left:5px;top:194px" width="7" height="7" viewBox="0 0 7 7"><path d="M6 0 V7 L0 3.5Z" fill="#0a0a0a"/></svg>
<div class="a" style="left:1084px;top:107px;width:2px;height:910px;background:#111;"></div>
<div class="a" style="left:1086px;top:107px;width:6px;height:910px;background:linear-gradient(90deg,#4a4a4a,#424242);"></div>
<div class="a" style="left:1093px;top:193px;width:827px;height:822px;background:#303030;"></div>
<svg class="a" style="left:1086px;top:524px" width="7" height="72" viewBox="0 0 7 72"><path d="M6 2 L1 6 L6 10Z" fill="#6a6a6a"/><rect x="1.5" y="26" width="1.5" height="1.5" fill="#777"/><rect x="1.5" y="29" width="1.5" height="1.5" fill="#777"/><rect x="1.5" y="32" width="1.5" height="1.5" fill="#777"/><rect x="1.5" y="35" width="1.5" height="1.5" fill="#777"/><rect x="1.5" y="38" width="1.5" height="1.5" fill="#777"/><rect x="1.5" y="41" width="1.5" height="1.5" fill="#777"/><rect x="4.5" y="26" width="1.5" height="1.5" fill="#777"/><rect x="4.5" y="29" width="1.5" height="1.5" fill="#777"/><rect x="4.5" y="32" width="1.5" height="1.5" fill="#777"/><rect x="4.5" y="35" width="1.5" height="1.5" fill="#777"/><rect x="4.5" y="38" width="1.5" height="1.5" fill="#777"/><rect x="4.5" y="41" width="1.5" height="1.5" fill="#777"/><path d="M1 63 L6 67 L1 71Z" fill="#6a6a6a"/></svg>
<svg class="a" style="left:1468px;top:107px" width="80" height="8" viewBox="0 0 80 8"><path d="M2 2 H10 L6 6Z M66 2 H74 L70 6Z" fill="#777"/><rect x="30" y="2" width="1.5" height="1.5" fill="#6a6a6a"/><rect x="30" y="5" width="1.5" height="1.5" fill="#6a6a6a"/><rect x="33" y="2" width="1.5" height="1.5" fill="#6a6a6a"/><rect x="33" y="5" width="1.5" height="1.5" fill="#6a6a6a"/><rect x="36" y="2" width="1.5" height="1.5" fill="#6a6a6a"/><rect x="36" y="5" width="1.5" height="1.5" fill="#6a6a6a"/><rect x="39" y="2" width="1.5" height="1.5" fill="#6a6a6a"/><rect x="39" y="5" width="1.5" height="1.5" fill="#6a6a6a"/><rect x="42" y="2" width="1.5" height="1.5" fill="#6a6a6a"/><rect x="42" y="5" width="1.5" height="1.5" fill="#6a6a6a"/><rect x="45" y="2" width="1.5" height="1.5" fill="#6a6a6a"/><rect x="45" y="5" width="1.5" height="1.5" fill="#6a6a6a"/><rect x="48" y="2" width="1.5" height="1.5" fill="#6a6a6a"/><rect x="48" y="5" width="1.5" height="1.5" fill="#6a6a6a"/></svg>
<div class="a" style="left:1093px;top:107px;width:827px;height:7px;background:linear-gradient(#4a4a4a,#3a3a3a);border-top:1px solid #2a2a2a"></div>
<div class="a" style="left:1093px;top:114px;width:827px;height:19px;background:#2a2a2a;"></div>
<div class="a" style="left:1093px;top:115px;width:108px;height:18px;background:#3b3b3b;border-right:1px solid #1c1c1c"></div>
<div class="t" style="left:1099.0px;top:118.8px;font-size:11.5px;color:#cfcfcf;font-style:italic;transform:scaleX(0.883);transform-origin:0 0;">/obj/big_vaccuum</div>
<svg class="a" style="left:1190px;top:121px" width="7" height="7" viewBox="0 0 7 7"><path d="M1 1L6 6M6 1L1 6" stroke="#ddd" stroke-width="1.3"/></svg>
<div class="a" style="left:1203px;top:115px;width:76px;height:18px;background:linear-gradient(#2e2e2e,#2a2a2a);border-right:1px solid #1c1c1c"></div>
<div class="t" style="left:1210.0px;top:118.8px;font-size:11.5px;color:#c8c8c8;transform:scaleX(0.841);transform-origin:0 0;">Tree View</div>
<svg class="a" style="left:1268px;top:121px" width="7" height="7" viewBox="0 0 7 7"><path d="M1 1L6 6M6 1L1 6" stroke="#ddd" stroke-width="1.3"/></svg>
<div class="a" style="left:1281px;top:115px;width:98px;height:18px;background:linear-gradient(#2e2e2e,#2a2a2a);border-right:1px solid #1c1c1c"></div>
<div class="t" style="left:1287.0px;top:118.8px;font-size:11.5px;color:#c8c8c8;transform:scaleX(0.876);transform-origin:0 0;">Material Palette</div>
<svg class="a" style="left:1368px;top:121px" width="7" height="7" viewBox="0 0 7 7"><path d="M1 1L6 6M6 1L1 6" stroke="#ddd" stroke-width="1.3"/></svg>
<div class="a" style="left:1381px;top:115px;width:94px;height:18px;background:linear-gradient(#2e2e2e,#2a2a2a);border-right:1px solid #1c1c1c"></div>
<div class="t" style="left:1388.0px;top:118.8px;font-size:11.5px;color:#c8c8c8;transform:scaleX(0.850);transform-origin:0 0;">Asset Browser</div>
<svg class="a" style="left:1463px;top:121px" width="7" height="7" viewBox="0 0 7 7"><path d="M1 1L6 6M6 1L1 6" stroke="#ddd" stroke-width="1.3"/></svg>
<svg class="a" style="left:1482px;top:117px" width="12" height="12" viewBox="0 0 12 12"><path d="M6 1V11M1 6H11" stroke="#e0e0e0" stroke-width="2"/></svg>
<div class="a" style="left:1886px;top:119px;width:13px;height:11px;background:linear-gradient(#eee,#bbb);"></div>
<svg class="a" style="left:1905px;top:121px" width="9" height="7" viewBox="0 0 9 7"><path d="M0 0H9L4.5 6Z" fill="#ddd"/></svg>
<div class="a" style="left:1093px;top:133px;width:827px;height:33px;background:linear-gradient(#3c3c3c,#363636);"></div>
<svg class="a" style="left:1098px;top:142px" width="22" height="16" viewBox="0 0 22 16"><path d="M1 7 L7 1 V4 H14 V10 H7 V13Z" fill="#d8d8d8"/><path d="M9 11 L13 14 L9 16Z" fill="#888"/></svg><svg class="a" style="left:1122px;top:142px" width="16" height="16" viewBox="0 0 16 16"><path d="M15 7 L9 1 V4 H2 V10 H9 V13Z" fill="#5a5a5a"/></svg>
<div class="a" style="left:1147px;top:139px;width:719px;height:24px;background:linear-gradient(#3a3a3a,#2f2f2f);border:1px solid #141414"></div>
<svg class="a" style="left:1154px;top:142px" width="17" height="17" viewBox="0 0 17 17"><rect x="1" y="4" width="15" height="12" fill="#5f6a70"/><path d="M1 3 L15 0 L16 3 L2 6Z" fill="#dcdcdc"/><path d="M3 2 L5 5 M7 1 L9 4 M11 0.5 L13 3.5" stroke="#222" stroke-width="1.2"/><rect x="3" y="10" width="11" height="4" fill="#8fa0a8"/></svg>
<div class="t" style="left:1175.0px;top:144.0px;font-size:13px;color:#dcdcdc;transform:scaleX(0.922);transform-origin:0 0;">obj</div>
<svg class="a" style="left:1196px;top:139px" width="10" height="24" viewBox="0 0 10 24"><path d="M1 0 L8 12 L1 24" fill="none" stroke="#141414" stroke-width="1.2"/></svg>
<svg class="a" style="left:1207px;top:141px" width="20" height="18" viewBox="0 0 20 18"><path d="M2 3 C2 1,8 1,8 3 V13 H2Z" fill="#5a8ad8"/><path d="M5 16 L11 5 L16 16Z" fill="#f0d030"/><circle cx="14" cy="9" r="5" fill="#e02a20"/></svg>
<div class="t" style="left:1230.0px;top:144.0px;font-size:13px;color:#dcdcdc;transform:scaleX(0.862);transform-origin:0 0;">big_vaccuum</div>
<div class="a" style="left:1838px;top:140px;width:26px;height:22px;background:linear-gradient(#383838,#2e2e2e);"></div>
<svg class="a" style="left:1847px;top:147px" width="9" height="7" viewBox="0 0 9 7"><path d="M0 0H9L4.5 6Z" fill="#aaa"/></svg>
<div class="a" style="left:1093px;top:166px;width:827px;height:1px;background:#121212;"></div>
<svg class="a" style="left:1875px;top:141px" width="20" height="18" viewBox="0 0 20 18"><path d="M2 9 H8 M8 4 V14 M8 5 L14 6 V12 L8 13" stroke="#ddd" stroke-width="1.5" fill="none"/><rect x="13" y="5" width="3" height="8" fill="#ccc"/></svg>
<svg class="a" style="left:1897px;top:140px" width="19" height="19" viewBox="0 0 19 19"><circle cx="9.5" cy="9.5" r="8" fill="none" stroke="#4a6aa8" stroke-width="1.5"/><circle cx="9.5" cy="9.5" r="5" fill="none" stroke="#5a8ad0" stroke-width="1.5"/><circle cx="9.5" cy="9.5" r="2" fill="#6a9ae0"/></svg>
<div class="a" style="left:1093px;top:167px;width:827px;height:26px;background:linear-gradient(#353535,#303030);border-bottom:1px solid #181818"></div>
<div class="a" style="left:1094px;top:168px;width:9px;height:24px;background:linear-gradient(90deg,#3c3c3c,#444);border-right:1px solid #1a1a1a"></div><svg class="a" style="left:1094px;top:170px" width="9" height="7"><path d="M1 6 L4.5 0.5 L8 6Z" fill="#0a0a0a"/></svg>
<div class="t" style="left:1109.0px;top:175.0px;font-size:13px;color:#d0d0d0;transform:scaleX(0.908);transform-origin:0 0;">Add</div>
<div class="t" style="left:1140.0px;top:175.0px;font-size:13px;color:#d0d0d0;transform:scaleX(0.937);transform-origin:0 0;">Edit</div>
<div class="t" style="left:1171.0px;top:175.0px;font-size:13px;color:#d0d0d0;transform:scaleX(0.865);transform-origin:0 0;">Go</div>
<div class="t" style="left:1196.0px;top:175.0px;font-size:13px;color:#d0d0d0;transform:scaleX(0.895);transform-origin:0 0;">View</div>
<div class="t" style="left:1231.0px;top:175.0px;font-size:13px;color:#d0d0d0;transform:scaleX(0.956);transform-origin:0 0;">Tools</div>
<div class="t" style="left:1270.0px;top:175.0px;font-size:13px;color:#d0d0d0;transform:scaleX(0.948);transform-origin:0 0;">Layout</div>
<svg class="a" style="left:1631px;top:171px" width="18" height="18" viewBox="0 0 18 18"><path d="M4 2V16 M4 5H10 M4 10H10 M4 15H10" stroke="#ccc" stroke-width="1.2" fill="none"/><rect x="10" y="3" width="5" height="4" fill="none" stroke="#ccc"/><rect x="10" y="8" width="5" height="4" fill="none" stroke="#ccc"/><rect x="10" y="13" width="5" height="4" fill="none" stroke="#ccc"/></svg>
<svg class="a" style="left:1655px;top:171px" width="18" height="18" viewBox="0 0 18 18"><rect x="2" y="2" width="14" height="14" fill="#ddd"/><path d="M2 5H16 M2 8H16 M2 11H16 M2 14H16" stroke="#888" stroke-width="0.8"/></svg>
<svg class="a" style="left:1695px;top:171px" width="18" height="18" viewBox="0 0 18 18"><rect x="2" y="2" width="14" height="14" fill="#222"/><rect x="3" y="3" width="3" height="3" fill="#e33"/><rect x="7.5" y="3" width="3" height="3" fill="#3c3"/><rect x="12" y="3" width="3" height="3" fill="#fc3"/><rect x="3" y="7.5" width="3" height="3" fill="#36f"/><rect x="7.5" y="7.5" width="3" height="3" fill="#f93"/><rect x="12" y="7.5" width="3" height="3" fill="#9cf"/><rect x="3" y="12" width="3" height="3" fill="#eee"/><rect x="7.5" y="12" width="3" height="3" fill="#c3c"/><rect x="12" y="12" width="3" height="3" fill="#6c6"/></svg>
<svg class="a" style="left:1720px;top:171px" width="18" height="18" viewBox="0 0 18 18"><rect x="2" y="2" width="14" height="14" fill="none" stroke="#bbb"/><path d="M4 6H8 M10 6H14 M4 10H7 M10 10H14 M4 13H8 M10 13H14" stroke="#ccc" stroke-width="1.2"/></svg>
<svg class="a" style="left:1760px;top:171px" width="18" height="18" viewBox="0 0 18 18"><rect x="1" y="3" width="16" height="12" fill="#ddd"/><rect x="3" y="5" width="7" height="3" fill="none" stroke="#333"/><rect x="7" y="10" width="8" height="3" fill="none" stroke="#333"/></svg>
<svg class="a" style="left:1784px;top:171px" width="18" height="18" viewBox="0 0 18 18"><path d="M2 2H16V12L12 16H2Z" fill="#e8d050"/><path d="M4 5H13 M4 8H13 M4 11H10" stroke="#444" stroke-width="1.2"/></svg>
<svg class="a" style="left:1808px;top:171px" width="18" height="18" viewBox="0 0 18 18"><rect x="2" y="2" width="13" height="13" fill="#5a8ad0" stroke="#bcd"/><path d="M3 12 L8 7 L14 12Z" fill="#adf"/><path d="M13 15 H18 M15.5 12.5 V17.5" stroke="#fff" stroke-width="1.6"/></svg>
<svg class="a" style="left:1833px;top:171px" width="18" height="18" viewBox="0 0 18 18"><path d="M2 7 L9 3 L16 7 V15 H2Z" fill="#d88a30"/><path d="M2 7 H16" stroke="#f0b050" stroke-width="2"/></svg>
<svg class="a" style="left:1873px;top:171px" width="18" height="18" viewBox="0 0 18 18"><circle cx="7.5" cy="7.5" r="5.5" fill="none" stroke="#ddd" stroke-width="1.6"/><path d="M11.5 11.5 L16 16" stroke="#ddd" stroke-width="2.2"/></svg>
<svg class="a" style="left:1898px;top:171px" width="18" height="18" viewBox="0 0 18 18"><rect x="1" y="2" width="16" height="14" fill="#ddd"/><ellipse cx="9" cy="9" rx="6" ry="4" fill="#fff" stroke="#222"/><circle cx="9" cy="9" r="2.2" fill="#111"/></svg>
<div class="a" style="left:0px;top:1015px;width:1920px;height:9px;background:linear-gradient(#555,#474747);border-top:1px solid #5a5a5a"></div>
<svg class="a" style="left:3px;top:1016px" width="8" height="7" viewBox="0 0 8 7"><path d="M0.5 6.5 L4 0.5 L7.5 6.5Z" fill="#0a0a0a"/></svg>
<div class="a" style="left:0px;top:1024px;width:1920px;height:1px;background:#0a0a0a;"></div>
<div class="a" style="left:0px;top:1025px;width:1920px;height:25px;background:#1c1c1c;"></div>
<div class="t" style="left:2.0px;top:1031.8px;font-size:12px;color:#d0d0d0;transform:scaleX(0.913);transform-origin:0 0;">Undid: Align nodes; Next: Move items</div>
<div class="a" style="left:1754px;top:1025px;width:23px;height:24px;background:#2e2e2e;"></div>
<svg class="a" style="left:1757px;top:1028px" width="18" height="18" viewBox="0 0 18 18"><path d="M2 9 C2 3,14 2,15 7 C17 9,15 13,12 13 L11 15 L8 13 C4 13,2 12,2 9Z" fill="#bbb"/><path d="M13 12 L16 15 L13 17Z" fill="#aaa"/></svg>
<div class="a" style="left:1778px;top:1025px;width:23px;height:24px;background:#2e2e2e;"></div>
<svg class="a" style="left:1781px;top:1028px" width="18" height="18" viewBox="0 0 18 18"><path d="M3 9 C3 4,12 2,15 6 L16 3 V9 H10 L13 7 C10 4,5 6,5 9Z M15 9 C15 14,6 16,3 12 L2 15 V9 H8 L5 11 C8 14,13 12,13 9Z" fill="#555"/></svg>
<div class="a" style="left:1802px;top:1025px;width:93px;height:24px;background:linear-gradient(#3e3e3e,#363636);"></div>
<div class="t" style="left:1814.0px;top:1031.8px;font-size:12px;color:#d4d4d4;transform:scaleX(0.929);transform-origin:0 0;">Auto Update</div>
<div class="a" style="left:1895px;top:1025px;width:25px;height:24px;background:#2e2e2e;"></div>
<svg class="a" style="left:1902px;top:1030px" width="10" height="14" viewBox="0 0 10 14"><path d="M0.5 5.5 L5 0.5 L9.5 5.5Z M0.5 8.5 L5 13.5 L9.5 8.5Z" fill="#aaa"/></svg>
<div class="a" style="left:35px;top:192px;width:1023px;height:823px;background:linear-gradient(#b5b5b5,#aaaaaa 45%,#9f9f9f);"></div>
<div class="a" style="left:0;top:0;width:1058px;height:1015px;overflow:hidden;clip-path:inset(192px 0 0 35px)"><svg class="a" style="left:0;top:0" width="1058" height="1015" viewBox="0 0 1058 1015"><path d="M124.0 510.0 L431.0 425.0" stroke="#696969" stroke-width="1.0" fill="none"/><path d="M250.0 584.0 L612.0 436.0" stroke="#696969" stroke-width="1.0" fill="none"/><path d="M255.0 531.0 L616.0 396.0" stroke="#585858" stroke-width="1.0" fill="none"/><path d="M374.0 582.0 L734.0 435.0" stroke="#585858" stroke-width="1.0" fill="none"/><path d="M394.0 592.0 L739.0 440.0" stroke="#696969" stroke-width="1.0" fill="none"/><path d="M404.0 602.0 L745.8 464.0" stroke="#696969" stroke-width="1.0" fill="none"/><path d="M416.6 650.0 L755.5 504.7" stroke="#696969" stroke-width="1.0" fill="none"/><path d="M428.6 681.0 L767.0 518.0" stroke="#696969" stroke-width="1.0" fill="none"/><path d="M439.0 691.0 L767.0 518.0" stroke="#696969" stroke-width="1.0" fill="none"/><path d="M630.0 820.0 L962.0 595.0" stroke="#585858" stroke-width="1.0" fill="none"/><path d="M133.2 507.4 L260.9 579.6 L265.8 527.0 L384.8 577.6 L404.4 587.4 L414.3 597.9 L426.8 645.6 L438.8 676.1 L448.8 685.8 L640.0 813.2" stroke="#585858" stroke-width="0.9" fill="none"/><path d="M142.4 504.9 L271.7 575.1 L276.7 522.9 L395.6 573.2 L414.7 582.9 L424.5 593.7 L436.9 641.3 L448.9 671.2 L458.7 680.6 L649.9 806.5" stroke="#696969" stroke-width="0.9" fill="none"/><path d="M150.1 502.8 L280.8 571.4 L285.7 519.5 L404.6 569.5 L423.3 579.1 L433.1 590.3 L445.4 637.6 L457.4 667.1 L466.9 676.3 L658.2 800.9" stroke="#585858" stroke-width="0.9" fill="none"/><path d="M173.1 496.4 L307.9 560.3 L312.8 509.4 L431.6 558.5 L449.2 567.7 L458.7 579.9 L470.8 626.8 L482.7 654.9 L491.5 663.3 L683.1 784.0" stroke="#696969" stroke-width="0.9" fill="none"/><path d="M203.8 487.9 L344.1 545.5 L348.9 495.9 L467.6 543.8 L483.7 552.5 L492.9 566.1 L504.7 612.2 L516.6 638.6 L524.3 646.0 L716.3 761.5" stroke="#696969" stroke-width="0.9" fill="none"/><path d="M234.5 479.4 L380.3 530.7 L385.0 482.4 L503.6 529.1 L518.2 537.3 L527.0 552.3 L538.6 597.7 L550.4 622.3 L557.1 628.7 L749.5 739.0" stroke="#696969" stroke-width="0.9" fill="none"/><path d="M265.2 470.9 L416.5 515.9 L421.1 468.9 L539.6 514.4 L552.7 522.1 L561.2 538.5 L572.5 583.2 L584.3 606.0 L589.9 611.4 L782.7 716.5" stroke="#696969" stroke-width="0.9" fill="none"/><path d="M295.9 462.4 L452.7 501.1 L457.2 455.4 L575.6 499.7 L587.2 506.9 L595.4 524.7 L606.4 568.6 L618.1 589.7 L622.7 594.1 L815.9 694.0" stroke="#696969" stroke-width="0.9" fill="none"/><path d="M500.5 439.2 L618.8 482.0 L628.6 488.6 L636.4 508.2 L647.1 551.2 L658.7 570.2 L662.0 573.4 L855.8 667.0" stroke="#696969" stroke-width="0.9" fill="none"/><path d="M543.8 423.0 L662.0 464.4 L670.0 470.4 L677.4 491.6 L687.7 533.8 L699.3 550.6 L701.4 552.6 L895.6 640.0" stroke="#696969" stroke-width="0.9" fill="none"/><path d="M590.7 405.4 L708.8 445.3 L714.9 450.6 L721.9 473.7 L731.8 514.9 L743.3 529.4 L744.0 530.1 L938.8 610.8" stroke="#696969" stroke-width="0.9" fill="none"/><path d="M616.0 396.0 L734.0 435.0 L739.0 440.0 L745.8 464.0 L755.5 504.7 L767.0 518.0 L767.0 518.0 L962.0 595.0" stroke="#585858" stroke-width="1.0" fill="none"/><path d="M149.2 524.8 L324.1 471.1" stroke="#7c7c7c" stroke-width="0.8" fill="none"/><path d="M174.4 539.6 L355.4 479.0" stroke="#7c7c7c" stroke-width="0.8" fill="none"/><path d="M199.6 554.4 L386.6 486.9" stroke="#7c7c7c" stroke-width="0.8" fill="none"/><path d="M224.8 569.2 L417.9 494.7" stroke="#7c7c7c" stroke-width="0.8" fill="none"/><path d="M272.9 538.6 L633.7 401.9" stroke="#7c7c7c" stroke-width="0.8" fill="none"/><path d="M293.1 547.3 L653.8 408.5" stroke="#7c7c7c" stroke-width="0.8" fill="none"/><path d="M314.5 556.5 L675.0 415.5" stroke="#7c7c7c" stroke-width="0.8" fill="none"/><path d="M335.9 565.7 L696.2 422.5" stroke="#7c7c7c" stroke-width="0.8" fill="none"/><path d="M356.1 574.4 L716.3 429.1" stroke="#7c7c7c" stroke-width="0.8" fill="none"/><path d="M458.1 703.9 L786.5 525.7" stroke="#7c7c7c" stroke-width="0.8" fill="none"/><path d="M477.2 716.8 L806.0 533.4" stroke="#7c7c7c" stroke-width="0.8" fill="none"/><path d="M496.3 729.7 L825.5 541.1" stroke="#7c7c7c" stroke-width="0.8" fill="none"/><path d="M515.4 742.6 L845.0 548.8" stroke="#7c7c7c" stroke-width="0.8" fill="none"/><path d="M534.5 755.5 L864.5 556.5" stroke="#7c7c7c" stroke-width="0.8" fill="none"/><path d="M553.6 768.4 L884.0 564.2" stroke="#7c7c7c" stroke-width="0.8" fill="none"/><path d="M572.7 781.3 L903.5 571.9" stroke="#7c7c7c" stroke-width="0.8" fill="none"/><path d="M591.8 794.2 L923.0 579.6" stroke="#7c7c7c" stroke-width="0.8" fill="none"/><path d="M610.9 807.1 L942.5 587.3" stroke="#7c7c7c" stroke-width="0.8" fill="none"/><path d="M124.9 513.0 L250.9 587.0 L255.9 534.0 L374.9 585.0 L394.9 595.0 L404.9 605.0 L417.5 653.0 L429.5 684.0 L439.9 694.0 L630.9 823.0" stroke="#7c7c7c" stroke-width="0.8" fill="none"/><path d="M125.8 516.0 L251.8 590.0 L256.8 537.0 L375.8 588.0 L395.8 598.0 L405.8 608.0 L418.4 656.0 L430.4 687.0 L440.8 697.0 L631.8 826.0" stroke="#7c7c7c" stroke-width="0.8" fill="none"/><path d="M126.7 519.0 L252.7 593.0 L257.7 540.0 L376.7 591.0 L396.7 601.0 L406.7 611.0 L419.3 659.0 L431.3 690.0 L441.7 700.0 L632.7 829.0" stroke="#7c7c7c" stroke-width="0.8" fill="none"/><path d="M572.0 669.0 L470.0 663.0" stroke="#7c7c7c" stroke-width="0.75" fill="none"/><path d="M572.0 669.0 L674.0 724.0" stroke="#7c7c7c" stroke-width="0.75" fill="none"/><path d="M674.0 724.0 L760.0 700.0" stroke="#7c7c7c" stroke-width="0.75" fill="none"/><path d="M572.0 669.0 L640.0 600.0" stroke="#7c7c7c" stroke-width="0.75" fill="none"/><path d="M470.0 663.0 L520.0 600.0" stroke="#7c7c7c" stroke-width="0.75" fill="none"/><path d="M674.0 724.0 L700.0 800.0" stroke="#7c7c7c" stroke-width="0.75" fill="none"/><path d="M572.0 669.0 L560.0 740.0" stroke="#7c7c7c" stroke-width="0.75" fill="none"/><path d="M650.0 560.0 L572.0 669.0" stroke="#7c7c7c" stroke-width="0.75" fill="none"/><path d="M740.0 640.0 L674.0 724.0" stroke="#7c7c7c" stroke-width="0.75" fill="none"/><path d="M247.0 500.0 L180.0 520.0" stroke="#7c7c7c" stroke-width="0.75" fill="none"/><path d="M247.0 500.0 L300.0 470.0" stroke="#7c7c7c" stroke-width="0.75" fill="none"/><path d="M247.0 500.0 L250.0 560.0" stroke="#7c7c7c" stroke-width="0.75" fill="none"/><path d="M145.0 603.0 L634.0 937.0" stroke="#585858" stroke-width="1.1" fill="none"/><path d="M150.0 598.0 L628.0 925.0" stroke="#7c7c7c" stroke-width="0.8" fill="none"/><path d="M250.0 584.0 L256.0 676.4" stroke="#7c7c7c" stroke-width="0.8" fill="none"/><path d="M255.0 531.0 L261.0 679.8" stroke="#7c7c7c" stroke-width="0.8" fill="none"/><path d="M374.0 582.0 L380.0 761.5" stroke="#7c7c7c" stroke-width="0.8" fill="none"/><path d="M394.0 592.0 L400.0 775.3" stroke="#7c7c7c" stroke-width="0.8" fill="none"/><path d="M404.0 602.0 L410.0 782.1" stroke="#7c7c7c" stroke-width="0.8" fill="none"/><path d="M416.6 650.0 L422.6 790.8" stroke="#7c7c7c" stroke-width="0.8" fill="none"/><path d="M428.6 681.0 L434.6 799.0" stroke="#7c7c7c" stroke-width="0.8" fill="none"/><path d="M439.0 691.0 L445.0 806.2" stroke="#7c7c7c" stroke-width="0.8" fill="none"/><path d="M630.0 820.0 L636.0 937.4" stroke="#7c7c7c" stroke-width="0.8" fill="none"/><path d="M160.0 531.1 L166.0 614.5" stroke="#7c7c7c" stroke-width="0.7" fill="none"/><path d="M180.0 542.9 L186.0 628.3" stroke="#7c7c7c" stroke-width="0.7" fill="none"/><path d="M200.0 554.6 L206.0 642.0" stroke="#7c7c7c" stroke-width="0.7" fill="none"/><path d="M220.0 566.4 L226.0 655.8" stroke="#7c7c7c" stroke-width="0.7" fill="none"/><path d="M285.0 543.9 L291.0 700.4" stroke="#7c7c7c" stroke-width="0.7" fill="none"/><path d="M300.0 550.3 L306.0 710.7" stroke="#7c7c7c" stroke-width="0.7" fill="none"/><path d="M320.0 558.9 L326.0 724.4" stroke="#7c7c7c" stroke-width="0.7" fill="none"/><path d="M340.0 567.4 L346.0 738.2" stroke="#7c7c7c" stroke-width="0.7" fill="none"/><path d="M355.0 573.9 L361.0 748.5" stroke="#7c7c7c" stroke-width="0.7" fill="none"/><path d="M455.0 701.8 L461.0 817.2" stroke="#7c7c7c" stroke-width="0.7" fill="none"/><path d="M480.0 718.7 L486.0 834.3" stroke="#7c7c7c" stroke-width="0.7" fill="none"/><path d="M500.0 732.2 L506.0 848.1" stroke="#7c7c7c" stroke-width="0.7" fill="none"/><path d="M520.0 745.7 L526.0 861.8" stroke="#7c7c7c" stroke-width="0.7" fill="none"/><path d="M540.0 759.2 L546.0 875.6" stroke="#7c7c7c" stroke-width="0.7" fill="none"/><path d="M560.0 772.7 L566.0 889.3" stroke="#7c7c7c" stroke-width="0.7" fill="none"/><path d="M580.0 786.2 L586.0 903.0" stroke="#7c7c7c" stroke-width="0.7" fill="none"/><path d="M600.0 799.7 L606.0 916.8" stroke="#7c7c7c" stroke-width="0.7" fill="none"/><path d="M615.0 809.9 L621.0 927.1" stroke="#7c7c7c" stroke-width="0.7" fill="none"/><path d="M124.7 519.6 L250.7 595.1 L255.7 548.9 L374.7 603.5 L404.7 623.6 L439.7 704.8 L630.7 834.1" stroke="#7c7c7c" stroke-width="0.7" fill="none"/><path d="M125.8 533.9 L251.8 611.7 L256.8 575.6 L375.8 635.9 L405.8 656.0 L440.8 725.6 L631.8 855.2" stroke="#7c7c7c" stroke-width="0.7" fill="none"/><path d="M126.9 548.3 L252.9 628.3 L257.9 602.4 L376.9 668.2 L406.9 688.5 L441.9 746.3 L632.9 876.3" stroke="#7c7c7c" stroke-width="0.7" fill="none"/><path d="M128.0 562.7 L254.0 645.0 L259.0 629.2 L378.0 700.5 L408.0 720.9 L443.0 767.0 L634.0 897.5" stroke="#7c7c7c" stroke-width="0.7" fill="none"/><path d="M129.0 577.0 L255.0 661.6 L260.0 656.0 L379.0 732.8 L409.0 753.3 L444.0 787.8 L635.0 918.6" stroke="#7c7c7c" stroke-width="0.7" fill="none"/><path d="M255.0 560.0 L320.0 615.0" stroke="#7c7c7c" stroke-width="0.7" fill="none"/><path d="M320.0 615.0 L410.0 600.0" stroke="#7c7c7c" stroke-width="0.7" fill="none"/><path d="M180.0 520.0 L260.0 620.0" stroke="#7c7c7c" stroke-width="0.7" fill="none"/><path d="M320.0 650.0 L250.0 700.0" stroke="#7c7c7c" stroke-width="0.7" fill="none"/><path d="M330.0 690.0 L230.0 650.0" stroke="#7c7c7c" stroke-width="0.7" fill="none"/><path d="M332.0 687.0 L420.0 720.0" stroke="#7c7c7c" stroke-width="0.7" fill="none"/><path d="M332.0 687.0 L410.0 640.0" stroke="#7c7c7c" stroke-width="0.7" fill="none"/><path d="M470.0 795.0 L400.0 760.0" stroke="#7c7c7c" stroke-width="0.7" fill="none"/><path d="M560.0 850.0 L640.0 830.0" stroke="#7c7c7c" stroke-width="0.7" fill="none"/><path d="M470.0 795.0 L560.0 850.0" stroke="#7c7c7c" stroke-width="0.7" fill="none"/><path d="M280.0 690.0 L470.0 795.0" stroke="#7c7c7c" stroke-width="0.7" fill="none"/><path d="M118.0 511.0 L121.0 523.0 L131.0 581.0 L139.0 595.5 L147.0 604.0" stroke="#585858" stroke-width="1.1" fill="none"/><path d="M124.0 510.0 L128.0 520.0 L137.0 578.0 L146.0 592.0 L155.0 598.0" stroke="#7c7c7c" stroke-width="0.8" fill="none"/><path d="M118.0 511.0 L124.0 505.0 L134.0 503.0" stroke="#585858" stroke-width="1.0" fill="none"/><path d="M118.0 511.0 L290.0 454.0" stroke="#585858" stroke-width="1.0" fill="none"/><path d="M126.0 507.0 L290.0 460.0" stroke="#696969" stroke-width="0.8" fill="none"/><path d="M628.0 925.0 L628.0 822.0 L633.0 813.0 L642.0 809.0 L650.0 812.0 L656.0 822.0 L653.0 925.0 L648.0 934.0 L638.0 937.0 L630.0 932.0 L628.0 925.0" stroke="#585858" stroke-width="1.1" fill="none"/><path d="M634.0 930.0 L634.0 820.0 L642.0 814.0 L650.0 820.0 L648.0 930.0" stroke="#7c7c7c" stroke-width="0.8" fill="none"/><path d="M656.0 826.0 L961.0 594.0" stroke="#585858" stroke-width="0.9" fill="none"/><path d="M656.3 830.2 L964.0 598.0" stroke="#696969" stroke-width="0.9" fill="none"/><path d="M656.6 834.4 L967.0 602.0" stroke="#696969" stroke-width="0.9" fill="none"/><path d="M656.9 838.6 L970.0 606.0" stroke="#696969" stroke-width="0.9" fill="none"/><path d="M657.2 842.8 L973.0 610.0" stroke="#585858" stroke-width="0.9" fill="none"/><path d="M650.0 931.0 L958.0 680.0 L962.0 675.0 L973.0 607.0 L970.0 598.0 L962.0 593.0" stroke="#585858" stroke-width="1.0" fill="none"/><path d="M651.0 924.0 L955.0 676.0" stroke="#7c7c7c" stroke-width="0.8" fill="none"/><path d="M677.6 826.8 L671.6 913.4" stroke="#7c7c7c" stroke-width="0.8" fill="none"/><path d="M702.2 808.2 L696.2 893.4" stroke="#7c7c7c" stroke-width="0.8" fill="none"/><path d="M726.8 789.6 L720.8 873.3" stroke="#7c7c7c" stroke-width="0.8" fill="none"/><path d="M751.5 771.1 L745.5 853.2" stroke="#7c7c7c" stroke-width="0.8" fill="none"/><path d="M776.1 752.5 L770.1 833.1" stroke="#7c7c7c" stroke-width="0.8" fill="none"/><path d="M800.8 734.0 L794.8 813.0" stroke="#7c7c7c" stroke-width="0.8" fill="none"/><path d="M825.4 715.4 L819.4 793.0" stroke="#7c7c7c" stroke-width="0.8" fill="none"/><path d="M850.0 696.8 L844.0 772.9" stroke="#7c7c7c" stroke-width="0.8" fill="none"/><path d="M874.7 678.3 L868.7 752.8" stroke="#7c7c7c" stroke-width="0.8" fill="none"/><path d="M899.3 659.7 L893.3 732.7" stroke="#7c7c7c" stroke-width="0.8" fill="none"/><path d="M924.0 641.2 L918.0 712.6" stroke="#7c7c7c" stroke-width="0.8" fill="none"/><path d="M945.5 624.9 L939.5 695.1" stroke="#7c7c7c" stroke-width="0.8" fill="none"/><path d="M654.2 869.4 L962.2 631.7" stroke="#7c7c7c" stroke-width="0.75" fill="none"/><path d="M652.7 891.4 L960.7 649.0" stroke="#7c7c7c" stroke-width="0.75" fill="none"/><path d="M651.2 913.4 L959.2 666.2" stroke="#7c7c7c" stroke-width="0.75" fill="none"/><path d="M646.0 806.0 L932.0 593.0" stroke="#7c7c7c" stroke-width="0.8" fill="none"/><path d="M632.0 800.0 L915.0 596.0" stroke="#7c7c7c" stroke-width="0.7" fill="none"/><path d="M356.5 395.0 L356.5 348.0 L363.0 338.0 L455.0 313.0 L464.0 315.0 L552.0 341.5 L557.0 350.0 L556.0 418.0" stroke="#585858" stroke-width="1.0" fill="none"/><path d="M360.0 395.0 L360.0 349.0 L366.0 341.0 L455.0 317.0 L463.0 319.0 L550.0 345.0 L553.0 352.0 L552.0 418.0" stroke="#7c7c7c" stroke-width="0.8" fill="none"/><path d="M359.0 348.0 L451.0 372.0 L455.0 368.0 L462.0 368.0 L466.0 372.0 L556.0 349.0" stroke="#696969" stroke-width="0.9" fill="none"/><path d="M362.0 344.0 L452.0 368.0 L460.0 364.0 L467.0 368.0 L553.0 345.0" stroke="#7c7c7c" stroke-width="0.8" fill="none"/><path d="M365.0 340.0 L453.0 364.0 L461.0 360.0 L468.0 364.0 L550.0 341.0" stroke="#7c7c7c" stroke-width="0.75" fill="none"/><path d="M451.0 372.0 L451.0 458.0" stroke="#696969" stroke-width="0.9" fill="none"/><path d="M466.0 372.0 L466.0 452.0" stroke="#696969" stroke-width="0.9" fill="none"/><path d="M458.0 368.0 L458.0 456.0" stroke="#7c7c7c" stroke-width="0.8" fill="none"/><path d="M390.0 356.0 L391.0 452.0" stroke="#7c7c7c" stroke-width="0.75" fill="none"/><path d="M407.0 331.0 L408.0 440.0" stroke="#7c7c7c" stroke-width="0.75" fill="none"/><path d="M495.0 325.0 L496.0 440.0" stroke="#7c7c7c" stroke-width="0.75" fill="none"/><path d="M512.0 358.0 L513.0 438.0" stroke="#7c7c7c" stroke-width="0.75" fill="none"/><path d="M460.0 316.0 L461.0 362.0" stroke="#7c7c7c" stroke-width="0.75" fill="none"/><path d="M378.0 352.0 L379.0 445.0" stroke="#7c7c7c" stroke-width="0.75" fill="none"/><path d="M525.0 350.0 L526.0 432.0" stroke="#7c7c7c" stroke-width="0.75" fill="none"/><path d="M407.0 331.0 L512.0 360.0" stroke="#7c7c7c" stroke-width="0.75" fill="none"/><path d="M390.0 356.0 L495.0 325.0" stroke="#7c7c7c" stroke-width="0.75" fill="none"/><path d="M378.0 340.0 L485.0 370.0" stroke="#7c7c7c" stroke-width="0.7" fill="none"/><path d="M420.0 360.0 L525.0 330.0" stroke="#7c7c7c" stroke-width="0.7" fill="none"/><path d="M356.0 395.0 L453.0 458.0 L558.0 417.0" stroke="#696969" stroke-width="0.9" fill="none"/><path d="M360.0 405.0 L453.0 465.0 L558.0 425.0" stroke="#7c7c7c" stroke-width="0.75" fill="none"/><path d="M688.5 600.0 L688.5 471.7 L695.3 459.0 L786.7 419.2 L796.4 420.1 L940.0 463.7 L950.5 477.0 L929.7 594.2" stroke="#585858" stroke-width="1.0" fill="none"/><path d="M692.0 600.0 L692.0 472.0 L698.0 462.0 L787.0 423.0 L795.0 424.0 L937.0 467.0 L946.0 478.0 L926.0 594.0" stroke="#7c7c7c" stroke-width="0.8" fill="none"/><path d="M693.0 466.0 L845.0 515.0 L856.0 513.0 L866.0 524.0 L946.0 474.0" stroke="#696969" stroke-width="0.9" fill="none"/><path d="M697.0 462.0 L846.0 510.0 L857.0 508.0 L866.0 518.0 L943.0 470.0" stroke="#7c7c7c" stroke-width="0.8" fill="none"/><path d="M845.0 524.0 L829.0 661.0" stroke="#696969" stroke-width="0.9" fill="none"/><path d="M866.0 524.0 L836.0 661.0" stroke="#696969" stroke-width="0.9" fill="none"/><path d="M856.0 520.0 L832.0 661.0" stroke="#7c7c7c" stroke-width="0.8" fill="none"/><path d="M836.0 660.0 L931.0 593.0" stroke="#696969" stroke-width="0.9" fill="none"/><path d="M688.0 600.0 L700.0 615.0 L829.0 661.0" stroke="#696969" stroke-width="0.9" fill="none"/><path d="M700.0 462.0 L850.0 508.0 L861.0 508.0 L942.0 467.0" stroke="#7c7c7c" stroke-width="0.8" fill="none"/><path d="M724.0 467.0 L720.0 615.0" stroke="#7c7c7c" stroke-width="0.75" fill="none"/><path d="M771.0 481.0 L765.0 635.0" stroke="#7c7c7c" stroke-width="0.75" fill="none"/><path d="M819.7 506.7 L803.7 646.0" stroke="#7c7c7c" stroke-width="0.75" fill="none"/><path d="M909.0 498.0 L889.7 631.0" stroke="#7c7c7c" stroke-width="0.75" fill="none"/><path d="M779.0 425.0 L775.0 480.0" stroke="#7c7c7c" stroke-width="0.75" fill="none"/><path d="M800.0 421.0 L797.0 485.0" stroke="#7c7c7c" stroke-width="0.75" fill="none"/><path d="M905.0 455.0 L900.0 495.0" stroke="#7c7c7c" stroke-width="0.75" fill="none"/><path d="M746.0 474.0 L742.0 625.0" stroke="#7c7c7c" stroke-width="0.75" fill="none"/><path d="M795.0 494.0 L785.0 640.0" stroke="#7c7c7c" stroke-width="0.75" fill="none"/><path d="M885.0 510.0 L870.0 640.0" stroke="#7c7c7c" stroke-width="0.75" fill="none"/><path d="M930.0 485.0 L912.0 610.0" stroke="#7c7c7c" stroke-width="0.75" fill="none"/><path d="M726.0 473.6 L823.6 434.7" stroke="#7c7c7c" stroke-width="0.75" fill="none"/><path d="M775.0 487.0 L880.0 446.4" stroke="#7c7c7c" stroke-width="0.75" fill="none"/><path d="M825.5 504.7 L905.0 470.0" stroke="#7c7c7c" stroke-width="0.75" fill="none"/><path d="M786.7 421.0 L905.0 458.0" stroke="#7c7c7c" stroke-width="0.75" fill="none"/><path d="M740.0 440.0 L880.0 485.0" stroke="#7c7c7c" stroke-width="0.75" fill="none"/><path d="M760.0 430.0 L900.0 475.0" stroke="#7c7c7c" stroke-width="0.75" fill="none"/><path d="M267.3 503.8 L255.5 509.2 L238.6 509.2 L226.7 503.9 L226.7 496.2 L238.5 490.8 L255.4 490.8 L267.3 496.1 Z" stroke="#585858" stroke-width="1.3" fill="none"/><path d="M267.3 533.8 L255.5 539.2 L238.6 539.2 L226.7 533.9 L226.7 526.2 L238.5 520.8 L255.4 520.8 L267.3 526.1 Z" stroke="#7c7c7c" stroke-width="0.8" fill="none"/><path d="M267.3 503.8 L267.3 533.8" stroke="#7c7c7c" stroke-width="0.7" fill="none"/><path d="M255.5 509.2 L255.5 539.2" stroke="#7c7c7c" stroke-width="0.7" fill="none"/><path d="M238.6 509.2 L238.6 539.2" stroke="#7c7c7c" stroke-width="0.7" fill="none"/><path d="M226.7 503.9 L226.7 533.9" stroke="#7c7c7c" stroke-width="0.7" fill="none"/><path d="M597.0 674.3 L582.4 681.9 L561.7 681.9 L547.1 674.4 L547.0 663.7 L561.6 656.1 L582.3 656.1 L596.9 663.6 Z" stroke="#585858" stroke-width="1.3" fill="none"/><path d="M597.0 722.3 L582.4 729.9 L561.7 729.9 L547.1 722.4 L547.0 711.7 L561.6 704.1 L582.3 704.1 L596.9 711.6 Z" stroke="#7c7c7c" stroke-width="0.8" fill="none"/><path d="M597.0 674.3 L597.0 722.3" stroke="#7c7c7c" stroke-width="0.7" fill="none"/><path d="M582.4 681.9 L582.4 729.9" stroke="#7c7c7c" stroke-width="0.7" fill="none"/><path d="M561.7 681.9 L561.7 729.9" stroke="#7c7c7c" stroke-width="0.7" fill="none"/><path d="M547.1 674.4 L547.1 722.4" stroke="#7c7c7c" stroke-width="0.7" fill="none"/><path d="M699.0 729.3 L684.4 736.9 L663.7 736.9 L649.1 729.4 L649.0 718.7 L663.6 711.1 L684.3 711.1 L698.9 718.6 Z" stroke="#585858" stroke-width="1.3" fill="none"/><path d="M699.0 777.3 L684.4 784.9 L663.7 784.9 L649.1 777.4 L649.0 766.7 L663.6 759.1 L684.3 759.1 L698.9 766.6 Z" stroke="#7c7c7c" stroke-width="0.8" fill="none"/><path d="M699.0 729.3 L699.0 777.3" stroke="#7c7c7c" stroke-width="0.7" fill="none"/><path d="M684.4 736.9 L684.4 784.9" stroke="#7c7c7c" stroke-width="0.7" fill="none"/><path d="M663.7 736.9 L663.7 784.9" stroke="#7c7c7c" stroke-width="0.7" fill="none"/><path d="M649.1 729.4 L649.1 777.4" stroke="#7c7c7c" stroke-width="0.7" fill="none"/><path d="M336.5 616.0 L326.9 634.7 L313.8 640.1 L305.0 629.1 L305.5 608.0 L315.1 589.3 L328.2 583.9 L337.0 594.9 Z" stroke="#555" stroke-width="1.5" fill="none"/><path d="M340.5 618.0 L330.9 636.7 L317.8 642.1 L309.0 631.1 L309.5 610.0 L319.1 591.3 L332.2 585.9 L341.0 596.9 Z" stroke="#696969" stroke-width="1.0" fill="none"/><path d="M336.5 616.0 L340.5 618.0" stroke="#696969" stroke-width="0.8" fill="none"/><path d="M326.9 634.7 L330.9 636.7" stroke="#696969" stroke-width="0.8" fill="none"/><path d="M313.8 640.1 L317.8 642.1" stroke="#696969" stroke-width="0.8" fill="none"/><path d="M305.0 629.1 L309.0 631.1" stroke="#696969" stroke-width="0.8" fill="none"/><path d="M305.5 608.0 L309.5 610.0" stroke="#696969" stroke-width="0.8" fill="none"/><path d="M315.1 589.3 L319.1 591.3" stroke="#696969" stroke-width="0.8" fill="none"/><path d="M328.2 583.9 L332.2 585.9" stroke="#696969" stroke-width="0.8" fill="none"/><path d="M337.0 594.9 L341.0 596.9" stroke="#696969" stroke-width="0.8" fill="none"/><path d="M332.6 615.0 L325.4 629.0 L315.6 633.1 L309.0 624.8 L309.4 609.0 L316.6 595.0 L326.4 590.9 L333.0 599.2 Z" stroke="#7c7c7c" stroke-width="0.8" fill="none"/><path d="M336.5 616.0 L326.9 634.7 L313.8 640.1 L305.0 629.1 L305.5 608.0 L315.1 589.3 L328.2 583.9 L337.0 594.9 Z" stroke="#4a4a4a" stroke-width="2.4" fill="none"/><path d="M506.1 785.9 L504.4 804.8 L490.7 813.3 L473.1 806.3 L461.9 788.1 L463.6 769.2 L477.3 760.7 L494.9 767.7 Z" stroke="#7a7a7a" stroke-width="2.0" fill="none"/><path d="M503.0 786.1 L501.5 802.3 L489.8 809.6 L474.6 803.6 L465.0 787.9 L466.5 771.7 L478.2 764.4 L493.4 770.4 Z" stroke="#888" stroke-width="1.0" fill="none"/><path d="M470.1 806.9 L506.1 785.9" stroke="#5e5e5e" stroke-width="0.9" fill="none"/><path d="M468.4 825.8 L504.4 804.8" stroke="#5e5e5e" stroke-width="0.9" fill="none"/><path d="M454.7 834.3 L490.7 813.3" stroke="#5e5e5e" stroke-width="0.9" fill="none"/><path d="M437.1 827.3 L473.1 806.3" stroke="#5e5e5e" stroke-width="0.9" fill="none"/><path d="M425.9 809.1 L461.9 788.1" stroke="#5e5e5e" stroke-width="0.9" fill="none"/><path d="M427.6 790.2 L463.6 769.2" stroke="#5e5e5e" stroke-width="0.9" fill="none"/><path d="M441.3 781.7 L477.3 760.7" stroke="#5e5e5e" stroke-width="0.9" fill="none"/><path d="M458.9 788.7 L494.9 767.7" stroke="#5e5e5e" stroke-width="0.9" fill="none"/><path d="M470.1 806.9 L468.4 825.8 L454.7 834.3 L437.1 827.3 L425.9 809.1 L427.6 790.2 L441.3 781.7 L458.9 788.7 Z" stroke="#555" stroke-width="1.2" fill="none"/><path d="M469.9 806.0 L468.4 823.0 L456.1 830.6 L440.2 824.4 L430.1 808.0 L431.6 791.0 L443.9 783.4 L459.8 789.6 Z" stroke="#777" stroke-width="0.8" fill="none"/><path d="M596.1 843.9 L594.4 862.8 L580.7 871.3 L563.1 864.3 L551.9 846.1 L553.6 827.2 L567.3 818.7 L584.9 825.7 Z" stroke="#7a7a7a" stroke-width="2.0" fill="none"/><path d="M593.0 844.1 L591.5 860.3 L579.8 867.6 L564.6 861.6 L555.0 845.9 L556.5 829.7 L568.2 822.4 L583.4 828.4 Z" stroke="#888" stroke-width="1.0" fill="none"/><path d="M560.1 866.9 L596.1 843.9" stroke="#5e5e5e" stroke-width="0.9" fill="none"/><path d="M558.4 885.8 L594.4 862.8" stroke="#5e5e5e" stroke-width="0.9" fill="none"/><path d="M544.7 894.3 L580.7 871.3" stroke="#5e5e5e" stroke-width="0.9" fill="none"/><path d="M527.1 887.3 L563.1 864.3" stroke="#5e5e5e" stroke-width="0.9" fill="none"/><path d="M515.9 869.1 L551.9 846.1" stroke="#5e5e5e" stroke-width="0.9" fill="none"/><path d="M517.6 850.2 L553.6 827.2" stroke="#5e5e5e" stroke-width="0.9" fill="none"/><path d="M531.3 841.7 L567.3 818.7" stroke="#5e5e5e" stroke-width="0.9" fill="none"/><path d="M548.9 848.7 L584.9 825.7" stroke="#5e5e5e" stroke-width="0.9" fill="none"/><path d="M560.1 866.9 L558.4 885.8 L544.7 894.3 L527.1 887.3 L515.9 869.1 L517.6 850.2 L531.3 841.7 L548.9 848.7 Z" stroke="#555" stroke-width="1.2" fill="none"/><path d="M559.9 866.0 L558.4 883.0 L546.1 890.6 L530.2 884.4 L520.1 868.0 L521.6 851.0 L533.9 843.4 L549.8 849.6 Z" stroke="#777" stroke-width="0.8" fill="none"/><path d="M337.2 692.2 L332.1 695.7 L327.0 694.2 L324.8 688.4 L326.8 681.8 L331.9 678.3 L337.0 679.8 L339.2 685.6 Z" stroke="#696969" stroke-width="1.2" fill="none"/><circle cx="472" cy="663" r="3.5" fill="#555"/><circle cx="176" cy="600" r="3" fill="#666"/><path d="M346.1 485.2 L331.7 491.0 L311.3 491.0 L296.9 485.2 L296.9 476.8 L311.3 471.0 L331.7 471.0 L346.1 476.8 Z" stroke="#7c7c7c" stroke-width="0.8" fill="none"/><path d="M282.0 379.9 L349.0 379.9 L349.5 474.4 L341.1 481.6 L321.5 484.0 L301.9 481.6 L293.5 474.4 Z" stroke="#2c2c2c" stroke-width="1.1" fill="#9c9c9c"/><path d="M297.1 396.0 L335.6 396.0 L338.3 472.0 L306.1 472.0 Z" stroke="none" stroke-width="0" fill="#8e8e8e"/><path d="M284.7 395.3 L295.7 478.4" stroke="#3a3a3a" stroke-width="0.9" fill="none"/><path d="M302.8 393.4 L310.9 481.0" stroke="#3a3a3a" stroke-width="0.9" fill="none"/><path d="M328.2 393.4 L332.1 481.0" stroke="#3a3a3a" stroke-width="0.9" fill="none"/><path d="M346.3 395.3 L347.3 478.4" stroke="#3a3a3a" stroke-width="0.9" fill="none"/><path d="M293.5 474.4 L301.9 481.6 L321.5 484.0 L341.1 481.6 L349.5 474.4" stroke="#222" stroke-width="2.2" fill="none"/><path d="M282.0 374.1 L284.6 369.4 L302.7 362.9 L328.3 362.9 L346.4 369.4 L349.0 374.1 L349.0 379.9 L346.4 384.6 L328.3 391.1 L302.7 391.1 L284.6 384.6 L282.0 379.9 Z" stroke="#262626" stroke-width="1.2" fill="#a8a8a8"/><path d="M345.5 378.5 L327.9 384.9 L303.1 384.9 L285.5 378.5 L285.5 369.6 L303.1 363.3 L327.9 363.3 L345.5 369.6 Z" stroke="#333" stroke-width="0.8" fill="none"/><path d="M337.8 377.4 L324.7 382.1 L306.3 382.1 L293.2 377.4 L293.2 370.7 L306.3 366.0 L324.7 366.0 L337.8 370.7 Z" stroke="#333" stroke-width="0.8" fill="none"/><path d="M329.7 376.2 L321.4 379.2 L309.6 379.2 L301.3 376.2 L301.3 371.9 L309.6 368.9 L321.4 368.9 L329.7 371.9 Z" stroke="#333" stroke-width="0.8" fill="none"/><path d="M322.3 375.1 L318.3 376.5 L312.7 376.5 L308.7 375.1 L308.7 373.0 L312.7 371.6 L318.3 371.6 L322.3 373.0 Z" stroke="#333" stroke-width="0.8" fill="none"/><path d="M315.5 374.1 L346.4 378.7" stroke="#3a3a3a" stroke-width="0.7" fill="none"/><path d="M346.4 378.7 L346.4 384.6" stroke="#333" stroke-width="0.8" fill="none"/><path d="M315.5 374.1 L328.3 385.2" stroke="#3a3a3a" stroke-width="0.7" fill="none"/><path d="M328.3 385.2 L328.3 391.1" stroke="#333" stroke-width="0.8" fill="none"/><path d="M315.5 374.1 L302.7 385.2" stroke="#3a3a3a" stroke-width="0.7" fill="none"/><path d="M302.7 385.2 L302.7 391.1" stroke="#333" stroke-width="0.8" fill="none"/><path d="M315.5 374.1 L284.6 378.7" stroke="#3a3a3a" stroke-width="0.7" fill="none"/><path d="M284.6 378.7 L284.6 384.6" stroke="#333" stroke-width="0.8" fill="none"/><path d="M315.5 374.1 L284.6 369.4" stroke="#3a3a3a" stroke-width="0.7" fill="none"/><path d="M315.5 374.1 L302.7 362.9" stroke="#3a3a3a" stroke-width="0.7" fill="none"/><path d="M315.5 374.1 L328.3 362.9" stroke="#3a3a3a" stroke-width="0.7" fill="none"/><path d="M315.5 374.1 L346.4 369.4" stroke="#3a3a3a" stroke-width="0.7" fill="none"/><path d="M282.0 372.9 L284.6 377.6 L302.7 384.1 L328.3 384.1 L346.4 377.6 L349.0 372.9" stroke="#2a2a2a" stroke-width="0.9" fill="none"/><path d="M282.0 376.4 L284.6 381.1 L302.7 387.6 L328.3 387.6 L346.4 381.1 L349.0 376.4" stroke="#2a2a2a" stroke-width="0.9" fill="none"/><path d="M282.0 379.9 L284.6 384.6 L302.7 391.1 L328.3 391.1 L346.4 384.6 L349.0 379.9" stroke="#2a2a2a" stroke-width="0.9" fill="none"/><path d="M312.0 482.8 L313.0 510.8" stroke="#353535" stroke-width="1.8" fill="none"/><path d="M319.0 482.8 L320.0 510.8" stroke="#353535" stroke-width="1.8" fill="none"/><path d="M326.0 482.8 L327.0 510.8" stroke="#353535" stroke-width="1.8" fill="none"/><path d="M333.0 482.8 L334.0 510.8" stroke="#353535" stroke-width="1.8" fill="none"/><path d="M340.0 482.8 L341.0 510.8" stroke="#353535" stroke-width="1.8" fill="none"/><path d="M409.3 515.2 L393.9 521.2 L372.1 521.2 L356.7 515.2 L356.7 506.8 L372.1 500.8 L393.9 500.8 L409.3 506.8 Z" stroke="#7c7c7c" stroke-width="0.8" fill="none"/><path d="M345.0 405.8 L413.0 405.8 L413.0 504.3 L404.0 511.7 L383.0 514.1 L362.0 511.7 L353.0 504.3 Z" stroke="#2c2c2c" stroke-width="1.1" fill="#9c9c9c"/><path d="M360.3 422.0 L399.4 422.0 L401.0 502.0 L366.5 502.0 Z" stroke="none" stroke-width="0" fill="#8e8e8e"/><path d="M347.7 421.4 L355.4 508.4" stroke="#3a3a3a" stroke-width="0.9" fill="none"/><path d="M366.1 419.4 L371.6 511.0" stroke="#3a3a3a" stroke-width="0.9" fill="none"/><path d="M391.9 419.4 L394.4 511.0" stroke="#3a3a3a" stroke-width="0.9" fill="none"/><path d="M410.3 421.4 L410.6 508.4" stroke="#3a3a3a" stroke-width="0.9" fill="none"/><path d="M353.0 504.3 L362.0 511.7 L383.0 514.1 L404.0 511.7 L413.0 504.3" stroke="#222" stroke-width="2.2" fill="none"/><path d="M345.0 399.2 L347.6 394.6 L366.0 387.9 L392.0 387.9 L410.4 394.6 L413.0 399.2 L413.0 405.8 L410.4 410.4 L392.0 417.1 L366.0 417.1 L347.6 410.4 L345.0 405.8 Z" stroke="#262626" stroke-width="1.2" fill="#a8a8a8"/><path d="M409.5 403.8 L391.6 410.2 L366.4 410.2 L348.5 403.8 L348.5 394.7 L366.4 388.3 L391.6 388.3 L409.5 394.7 Z" stroke="#333" stroke-width="0.8" fill="none"/><path d="M401.6 402.6 L388.4 407.4 L369.6 407.4 L356.4 402.6 L356.4 395.9 L369.6 391.1 L388.4 391.1 L401.6 395.9 Z" stroke="#333" stroke-width="0.8" fill="none"/><path d="M393.4 401.4 L385.0 404.4 L373.0 404.4 L364.6 401.4 L364.6 397.1 L373.0 394.0 L385.0 394.0 L393.4 397.1 Z" stroke="#333" stroke-width="0.8" fill="none"/><path d="M385.9 400.3 L381.9 401.7 L376.1 401.7 L372.1 400.3 L372.1 398.2 L376.1 396.8 L381.9 396.8 L385.9 398.2 Z" stroke="#333" stroke-width="0.8" fill="none"/><path d="M379.0 399.2 L410.4 403.9" stroke="#3a3a3a" stroke-width="0.7" fill="none"/><path d="M410.4 403.9 L410.4 410.4" stroke="#333" stroke-width="0.8" fill="none"/><path d="M379.0 399.2 L392.0 410.5" stroke="#3a3a3a" stroke-width="0.7" fill="none"/><path d="M392.0 410.5 L392.0 417.1" stroke="#333" stroke-width="0.8" fill="none"/><path d="M379.0 399.2 L366.0 410.5" stroke="#3a3a3a" stroke-width="0.7" fill="none"/><path d="M366.0 410.5 L366.0 417.1" stroke="#333" stroke-width="0.8" fill="none"/><path d="M379.0 399.2 L347.6 403.9" stroke="#3a3a3a" stroke-width="0.7" fill="none"/><path d="M347.6 403.9 L347.6 410.4" stroke="#333" stroke-width="0.8" fill="none"/><path d="M379.0 399.2 L347.6 394.6" stroke="#3a3a3a" stroke-width="0.7" fill="none"/><path d="M379.0 399.2 L366.0 387.9" stroke="#3a3a3a" stroke-width="0.7" fill="none"/><path d="M379.0 399.2 L392.0 387.9" stroke="#3a3a3a" stroke-width="0.7" fill="none"/><path d="M379.0 399.2 L410.4 394.6" stroke="#3a3a3a" stroke-width="0.7" fill="none"/><path d="M345.0 398.8 L347.6 403.4 L366.0 410.1 L392.0 410.1 L410.4 403.4 L413.0 398.8" stroke="#2a2a2a" stroke-width="0.9" fill="none"/><path d="M345.0 402.3 L347.6 406.9 L366.0 413.6 L392.0 413.6 L410.4 406.9 L413.0 402.3" stroke="#2a2a2a" stroke-width="0.9" fill="none"/><path d="M345.0 405.8 L347.6 410.4 L366.0 417.1 L392.0 417.1 L410.4 410.4 L413.0 405.8" stroke="#2a2a2a" stroke-width="0.9" fill="none"/><path d="M372.0 512.9 L373.0 540.9" stroke="#353535" stroke-width="1.8" fill="none"/><path d="M379.0 512.9 L380.0 540.9" stroke="#353535" stroke-width="1.8" fill="none"/><path d="M386.0 512.9 L387.0 540.9" stroke="#353535" stroke-width="1.8" fill="none"/><path d="M393.0 512.9 L394.0 540.9" stroke="#353535" stroke-width="1.8" fill="none"/><path d="M401.0 512.9 L402.0 540.9" stroke="#353535" stroke-width="1.8" fill="none"/><path d="M687.1 648.3 L666.5 655.9 L637.5 655.9 L616.9 648.3 L616.9 637.7 L637.5 630.1 L666.5 630.1 L687.1 637.7 Z" stroke="#7c7c7c" stroke-width="0.8" fill="none"/><path d="M612.0 521.5 L698.0 521.5 L692.0 635.4 L680.0 644.6 L652.0 647.7 L624.0 644.6 L612.0 635.4 Z" stroke="#2c2c2c" stroke-width="1.1" fill="#9c9c9c"/><path d="M631.4 541.0 L680.8 541.0 L676.0 634.0 L630.0 634.0 Z" stroke="none" stroke-width="0" fill="#8e8e8e"/><path d="M615.4 541.3 L615.2 640.5" stroke="#3a3a3a" stroke-width="0.9" fill="none"/><path d="M638.7 538.8 L636.8 643.8" stroke="#3a3a3a" stroke-width="0.9" fill="none"/><path d="M671.3 538.8 L667.2 643.8" stroke="#3a3a3a" stroke-width="0.9" fill="none"/><path d="M694.6 541.3 L688.8 640.5" stroke="#3a3a3a" stroke-width="0.9" fill="none"/><path d="M612.0 635.4 L624.0 644.6 L652.0 647.7 L680.0 644.6 L692.0 635.4" stroke="#222" stroke-width="2.2" fill="none"/><path d="M612.0 510.5 L615.3 504.6 L638.5 496.2 L671.5 496.2 L694.7 504.6 L698.0 510.5 L698.0 521.5 L694.7 527.4 L671.5 535.8 L638.5 535.8 L615.3 527.4 L612.0 521.5 Z" stroke="#262626" stroke-width="1.2" fill="#a8a8a8"/><path d="M693.5 516.2 L671.0 524.4 L639.0 524.4 L616.5 516.2 L616.5 504.7 L639.0 496.6 L671.0 496.6 L693.5 504.7 Z" stroke="#333" stroke-width="0.8" fill="none"/><path d="M683.6 514.7 L666.8 520.8 L643.2 520.8 L626.4 514.7 L626.4 506.2 L643.2 500.2 L666.8 500.2 L683.6 506.2 Z" stroke="#333" stroke-width="0.8" fill="none"/><path d="M673.3 513.2 L662.6 517.1 L647.4 517.1 L636.7 513.2 L636.7 507.8 L647.4 503.9 L662.6 503.9 L673.3 507.8 Z" stroke="#333" stroke-width="0.8" fill="none"/><path d="M663.7 511.8 L658.6 513.6 L651.4 513.6 L646.3 511.8 L646.3 509.2 L651.4 507.3 L658.6 507.3 L663.7 509.2 Z" stroke="#333" stroke-width="0.8" fill="none"/><path d="M655.0 510.5 L694.7 516.4" stroke="#3a3a3a" stroke-width="0.7" fill="none"/><path d="M694.7 516.4 L694.7 527.4" stroke="#333" stroke-width="0.8" fill="none"/><path d="M655.0 510.5 L671.5 524.8" stroke="#3a3a3a" stroke-width="0.7" fill="none"/><path d="M671.5 524.8 L671.5 535.8" stroke="#333" stroke-width="0.8" fill="none"/><path d="M655.0 510.5 L638.5 524.8" stroke="#3a3a3a" stroke-width="0.7" fill="none"/><path d="M638.5 524.8 L638.5 535.8" stroke="#333" stroke-width="0.8" fill="none"/><path d="M655.0 510.5 L615.3 516.4" stroke="#3a3a3a" stroke-width="0.7" fill="none"/><path d="M615.3 516.4 L615.3 527.4" stroke="#333" stroke-width="0.8" fill="none"/><path d="M655.0 510.5 L615.3 504.6" stroke="#3a3a3a" stroke-width="0.7" fill="none"/><path d="M655.0 510.5 L638.5 496.2" stroke="#3a3a3a" stroke-width="0.7" fill="none"/><path d="M655.0 510.5 L671.5 496.2" stroke="#3a3a3a" stroke-width="0.7" fill="none"/><path d="M655.0 510.5 L694.7 504.6" stroke="#3a3a3a" stroke-width="0.7" fill="none"/><path d="M612.0 514.5 L615.3 520.4 L638.5 528.8 L671.5 528.8 L694.7 520.4 L698.0 514.5" stroke="#2a2a2a" stroke-width="0.9" fill="none"/><path d="M612.0 518.0 L615.3 523.9 L638.5 532.3 L671.5 532.3 L694.7 523.9 L698.0 518.0" stroke="#2a2a2a" stroke-width="0.9" fill="none"/><path d="M612.0 521.5 L615.3 527.4 L638.5 535.8 L671.5 535.8 L694.7 527.4 L698.0 521.5" stroke="#2a2a2a" stroke-width="0.9" fill="none"/><path d="M632.0 646.2 L633.0 674.2" stroke="#353535" stroke-width="1.8" fill="none"/><path d="M640.0 646.2 L641.0 674.2" stroke="#353535" stroke-width="1.8" fill="none"/><path d="M648.0 646.2 L649.0 674.2" stroke="#353535" stroke-width="1.8" fill="none"/><path d="M657.0 646.2 L658.0 674.2" stroke="#353535" stroke-width="1.8" fill="none"/><path d="M666.0 646.2 L667.0 674.2" stroke="#353535" stroke-width="1.8" fill="none"/><path d="M792.2 702.6 L771.9 710.6 L743.1 710.6 L722.8 702.6 L722.8 691.4 L743.1 683.4 L771.9 683.4 L792.2 691.4 Z" stroke="#7c7c7c" stroke-width="0.8" fill="none"/><path d="M718.0 566.6 L809.0 566.6 L797.0 689.1 L785.1 698.9 L757.5 702.2 L729.9 698.9 L718.0 689.1 Z" stroke="#2c2c2c" stroke-width="1.1" fill="#9c9c9c"/><path d="M738.5 587.0 L790.8 587.0 L781.2 688.0 L735.8 688.0 Z" stroke="none" stroke-width="0" fill="#8e8e8e"/><path d="M721.6 587.5 L721.2 694.5" stroke="#3a3a3a" stroke-width="0.9" fill="none"/><path d="M746.2 584.9 L742.5 698.1" stroke="#3a3a3a" stroke-width="0.9" fill="none"/><path d="M780.8 584.9 L772.5 698.1" stroke="#3a3a3a" stroke-width="0.9" fill="none"/><path d="M805.4 587.5 L793.8 694.5" stroke="#3a3a3a" stroke-width="0.9" fill="none"/><path d="M718.0 689.1 L729.9 698.9 L757.5 702.2 L785.1 698.9 L797.0 689.1" stroke="#222" stroke-width="2.2" fill="none"/><path d="M718.0 552.4 L721.5 546.1 L746.1 537.2 L780.9 537.2 L805.5 546.1 L809.0 552.4 L809.0 566.6 L805.5 572.9 L780.9 581.8 L746.1 581.8 L721.5 572.9 L718.0 566.6 Z" stroke="#262626" stroke-width="1.2" fill="#a8a8a8"/><path d="M804.3 558.5 L780.4 567.1 L746.6 567.1 L722.7 558.5 L722.7 546.3 L746.6 537.7 L780.4 537.7 L804.3 546.3 Z" stroke="#333" stroke-width="0.8" fill="none"/><path d="M793.8 556.9 L776.0 563.3 L751.0 563.3 L733.2 556.9 L733.2 547.9 L751.0 541.5 L776.0 541.5 L793.8 547.9 Z" stroke="#333" stroke-width="0.8" fill="none"/><path d="M782.8 555.3 L771.5 559.3 L755.5 559.3 L744.2 555.3 L744.2 549.5 L755.5 545.4 L771.5 545.4 L782.8 549.5 Z" stroke="#333" stroke-width="0.8" fill="none"/><path d="M772.7 553.8 L767.3 555.7 L759.7 555.7 L754.3 553.8 L754.3 551.0 L759.7 549.1 L767.3 549.1 L772.7 551.0 Z" stroke="#333" stroke-width="0.8" fill="none"/><path d="M763.5 552.4 L805.5 558.6" stroke="#3a3a3a" stroke-width="0.7" fill="none"/><path d="M805.5 558.6 L805.5 572.9" stroke="#333" stroke-width="0.8" fill="none"/><path d="M763.5 552.4 L780.9 567.5" stroke="#3a3a3a" stroke-width="0.7" fill="none"/><path d="M780.9 567.5 L780.9 581.8" stroke="#333" stroke-width="0.8" fill="none"/><path d="M763.5 552.4 L746.1 567.5" stroke="#3a3a3a" stroke-width="0.7" fill="none"/><path d="M746.1 567.5 L746.1 581.8" stroke="#333" stroke-width="0.8" fill="none"/><path d="M763.5 552.4 L721.5 558.6" stroke="#3a3a3a" stroke-width="0.7" fill="none"/><path d="M721.5 558.6 L721.5 572.9" stroke="#333" stroke-width="0.8" fill="none"/><path d="M763.5 552.4 L721.5 546.1" stroke="#3a3a3a" stroke-width="0.7" fill="none"/><path d="M763.5 552.4 L746.1 537.2" stroke="#3a3a3a" stroke-width="0.7" fill="none"/><path d="M763.5 552.4 L780.9 537.2" stroke="#3a3a3a" stroke-width="0.7" fill="none"/><path d="M763.5 552.4 L805.5 546.1" stroke="#3a3a3a" stroke-width="0.7" fill="none"/><path d="M718.0 559.6 L721.5 565.9 L746.1 574.8 L780.9 574.8 L805.5 565.9 L809.0 559.6" stroke="#2a2a2a" stroke-width="0.9" fill="none"/><path d="M718.0 563.1 L721.5 569.4 L746.1 578.3 L780.9 578.3 L805.5 569.4 L809.0 563.1" stroke="#2a2a2a" stroke-width="0.9" fill="none"/><path d="M718.0 566.6 L721.5 572.9 L746.1 581.8 L780.9 581.8 L805.5 572.9 L809.0 566.6" stroke="#2a2a2a" stroke-width="0.9" fill="none"/><path d="M730.0 700.6 L731.0 728.6" stroke="#353535" stroke-width="1.8" fill="none"/><path d="M740.0 700.6 L741.0 728.6" stroke="#353535" stroke-width="1.8" fill="none"/><path d="M749.0 700.6 L750.0 728.6" stroke="#353535" stroke-width="1.8" fill="none"/><path d="M758.0 700.6 L759.0 728.6" stroke="#353535" stroke-width="1.8" fill="none"/><path d="M768.0 700.6 L769.0 728.6" stroke="#353535" stroke-width="1.8" fill="none"/></svg></div>
<div class="a" style="left:938px;top:199px;width:48px;height:17px;background:transparent;border:1.5px solid #e8e85a"></div>
<div class="t" style="left:942.0px;top:202.3px;font-size:11.5px;color:#e8e85a;transform:scaleX(0.938);transform-origin:0 0;">persp1</div>
<svg class="a" style="left:976px;top:205px" width="7" height="5"><path d="M0 0H7L3.5 5Z" fill="#e8e85a"/></svg>
<div class="a" style="left:989px;top:199px;width:51px;height:17px;background:transparent;border:1.5px solid #e8e85a"></div>
<div class="t" style="left:993.0px;top:202.3px;font-size:11.5px;color:#e8e85a;transform:scaleX(0.955);transform-origin:0 0;">no cam</div>
<svg class="a" style="left:1030px;top:205px" width="7" height="5"><path d="M0 0H7L3.5 5Z" fill="#e8e85a"/></svg>
<div class="t" style="left:986.0px;top:936.4px;font-size:22px;color:#f2f2f2;font-weight:bold;transform:scaleX(0.947);transform-origin:0 0;text-shadow:1px 1px 1px #555">106fps</div>
<div class="t" style="left:1017.0px;top:965.7px;font-size:11px;color:#eeeeee;transform:scaleX(0.970);transform-origin:0 0;text-shadow:1px 1px 0 #777">9.47ms</div>
<div class="t" style="left:959.0px;top:985.0px;font-size:12px;color:#eeeeee;font-family:'Liberation Mono',monospace;transform:scaleX(1.065);transform-origin:0 0;text-shadow:1px 1px 0 #777">9,244  prims</div>
<div class="t" style="left:959.0px;top:1000.0px;font-size:12px;color:#eeeeee;font-family:'Liberation Mono',monospace;transform:scaleX(0.983);transform-origin:0 0;text-shadow:1px 1px 0 #777">10,072 points</div>
<div class="t" style="left:394.0px;top:995.7px;font-size:11px;color:#1a1a5a;font-weight:bold;">Select the geometry, then choose an operation to perform.</div>
<svg class="a" style="left:40px;top:968px" width="40" height="40"><path d="M17 24 V6" stroke="#40c040" stroke-width="1.3"/><path d="M17 24 L6 30" stroke="#3030d0" stroke-width="1.3"/><path d="M17 24 L30 31" stroke="#d03030" stroke-width="1.3"/><text x="19" y="9" font-size="8" fill="#40c040" font-family="Liberation Sans">y</text><text x="1" y="33" font-size="8" fill="#3030d0" font-family="Liberation Sans">z</text><text x="31" y="34" font-size="8" fill="#d03030" font-family="Liberation Sans">x</text></svg>
<div class="t" style="left:1795.0px;top:212.7px;font-size:24px;color:#4d4d4d;font-weight:bold;">Geometry</div>
<svg class="a" style="left:0;top:0" width="1920" height="1080" viewBox="0 0 1920 1080"><path d="M1328 313 V330" stroke="#6f8fc8" stroke-width="1.3" fill="none"/><path d="M1328 345 L1322 362" stroke="#6f8fc8" stroke-width="1.3" fill="none"/><path d="M1328 378 L1322 395" stroke="#6f8fc8" stroke-width="1.3" fill="none"/><path d="M1328 410 L1322 428" stroke="#6f8fc8" stroke-width="1.3" fill="none"/><path d="M1328 443 L1322 460" stroke="#6f8fc8" stroke-width="1.3" fill="none"/><path d="M1328 475 L1318 497" stroke="#6f8fc8" stroke-width="1.3" fill="none"/><path d="M1328 475 C1334 488,1350 490,1380 500 C1395 505,1401 508,1401.6 515" stroke="#6f8fc8" stroke-width="1.3" fill="none"/><path d="M1328 475 C1338 490,1380 492,1440 498 C1480 502,1498 503,1500 515" stroke="#6f8fc8" stroke-width="1.3" fill="none"/><path d="M1401.6 526 V547" stroke="#6f8fc8" stroke-width="1.3" fill="none"/><path d="M1500 526 L1501 553" stroke="#6f8fc8" stroke-width="1.3" fill="none"/><path d="M1594 526 L1591 546" stroke="#6f8fc8" stroke-width="1.3" fill="none"/><path d="M1683 526 L1680 546" stroke="#6f8fc8" stroke-width="1.3" fill="none"/><path d="M1318 512 L1358 722 Q1359 728,1360 730" stroke="#6f8fc8" stroke-width="1.3" fill="none"/><path d="M1401.6 563 L1376 720 Q1368 726,1365 730" stroke="#6f8fc8" stroke-width="1.3" fill="none"/><path d="M1501 568 L1383 719 Q1372 726,1369 730" stroke="#6f8fc8" stroke-width="1.3" fill="none"/><path d="M1591 562 L1388 718 Q1376 726,1373 730" stroke="#6f8fc8" stroke-width="1.3" fill="none"/><path d="M1680 562 L1392 718 Q1380 726,1377 730" stroke="#6f8fc8" stroke-width="1.3" fill="none"/><path d="M1783 526 C1780 535,1770 540,1740 555 L1396 718 Q1384 726,1381 730" stroke="#7a7f8a" stroke-width="1.1" fill="none"/><path d="M1370.6 749 V759" stroke="#6f8fc8" stroke-width="1.3" fill="none"/><path d="M1370.6 774 C1368 782,1362 783,1350 783 H1222 C1212 783,1208.7 786,1208.7 790" stroke="#6f8fc8" stroke-width="1.3" fill="none"/><path d="M1370.6 774 C1373 782,1380 783,1390 783 H1548 C1557 783,1560.5 786,1560.5 790" stroke="#6f8fc8" stroke-width="1.3" fill="none"/><path d="M1340 783 C1325 783,1321.5 786,1321.5 790" stroke="#6f8fc8" stroke-width="1.3" fill="none"/><path d="M1420 783 C1440 783,1444 786,1444 790" stroke="#6f8fc8" stroke-width="1.3" fill="none"/><path d="M1208.7 807 V824" stroke="#6f8fc8" stroke-width="1.3" fill="none"/><path d="M1321.5 807 V824" stroke="#6f8fc8" stroke-width="1.3" fill="none"/><path d="M1560.5 807 V824" stroke="#6f8fc8" stroke-width="1.3" fill="none"/><path d="M1208.7 839 C1210 848,1218 852,1240 862 L1358 905 C1362 907,1362 908,1362 909" stroke="#6f8fc8" stroke-width="1.3" fill="none"/><path d="M1321.5 839 C1325 850,1330 855,1340 868 L1366 905" stroke="#6f8fc8" stroke-width="1.3" fill="none"/><path d="M1444 807 C1443 820,1438 830,1425 845 L1374 905" stroke="#6f8fc8" stroke-width="1.3" fill="none"/><path d="M1560.5 839 C1558 850,1550 853,1530 860 L1390 903 C1383 906,1381 907,1380 909" stroke="#6f8fc8" stroke-width="1.3" fill="none"/><path d="M1371 925 V944" stroke="#9a9a9a" stroke-width="1.3" fill="none"/></svg>
<svg class="a" style="left:0;top:0" width="1920" height="1080" viewBox="0 0 1920 1080"><path d="M1310.0 299.5 H1346.0 L1342.0 310.5 H1314.0Z" fill="#d9d9d9" stroke="#888" stroke-width="0.6"/><path d="M1316.2 301.0 L1313.8 309.0" stroke="#8f8f8f" stroke-width="1.1"/><path d="M1321.2 301.0 L1318.8 309.0" stroke="#8f8f8f" stroke-width="1.1"/><path d="M1337.2 301.0 L1334.8 309.0" stroke="#8f8f8f" stroke-width="1.1"/><path d="M1342.2 301.0 L1339.8 309.0" stroke="#8f8f8f" stroke-width="1.1"/><rect x="1324.5" y="303" width="7" height="6" fill="#fff" stroke="#6a6a90" stroke-width="0.8"/><circle cx="1328" cy="302" r="2" fill="#c02020"/><circle cx="1328" cy="312.8" r="2.3" fill="#bdbdbd"/><rect x="1311.0" y="331.8" width="34" height="11" rx="2.2" fill="#d9d9d9" stroke="#9a9a9a" stroke-width="0.6"/><path d="M1316.2 333.3 L1313.8 341.3" stroke="#8f8f8f" stroke-width="1.1"/><path d="M1321.2 333.3 L1318.8 341.3" stroke="#8f8f8f" stroke-width="1.1"/><path d="M1337.2 333.3 L1334.8 341.3" stroke="#8f8f8f" stroke-width="1.1"/><path d="M1342.2 333.3 L1339.8 341.3" stroke="#8f8f8f" stroke-width="1.1"/><path d="M1323 338 L1327 334 M1329 339 L1333 335" stroke="#4a6aa8" stroke-width="2"/><circle cx="1328" cy="337" r="2" fill="#6a8ac8"/><circle cx="1328" cy="329.5" r="2.3" fill="#bdbdbd"/><circle cx="1328" cy="345.1" r="2.3" fill="#bdbdbd"/><rect x="1311.0" y="364.5" width="34" height="11" rx="2.2" fill="#d9d9d9" stroke="#9a9a9a" stroke-width="0.6"/><path d="M1316.2 366.0 L1313.8 374.0" stroke="#8f8f8f" stroke-width="1.1"/><path d="M1321.2 366.0 L1318.8 374.0" stroke="#8f8f8f" stroke-width="1.1"/><path d="M1337.2 366.0 L1334.8 374.0" stroke="#8f8f8f" stroke-width="1.1"/><path d="M1342.2 366.0 L1339.8 374.0" stroke="#8f8f8f" stroke-width="1.1"/><circle cx="1328" cy="371" r="4" fill="#9aa8b8"/><path d="M1329 366 L1332 369" stroke="#ddd" stroke-width="1.2"/><circle cx="1322" cy="362.2" r="2.3" fill="#bdbdbd"/><circle cx="1335" cy="362.2" r="2.3" fill="#bdbdbd"/><circle cx="1328" cy="377.8" r="2.3" fill="#bdbdbd"/><rect x="1311.0" y="397.0" width="34" height="11" rx="2.2" fill="#d9d9d9" stroke="#9a9a9a" stroke-width="0.6"/><path d="M1316.2 398.5 L1313.8 406.5" stroke="#8f8f8f" stroke-width="1.1"/><path d="M1321.2 398.5 L1318.8 406.5" stroke="#8f8f8f" stroke-width="1.1"/><path d="M1337.2 398.5 L1334.8 406.5" stroke="#8f8f8f" stroke-width="1.1"/><path d="M1342.2 398.5 L1339.8 406.5" stroke="#8f8f8f" stroke-width="1.1"/><circle cx="1327" cy="402.5" r="4" fill="#e8b030"/><path d="M1325 400.5 L1332 405.5" stroke="#c04020" stroke-width="1.3"/><circle cx="1322" cy="394.7" r="2.3" fill="#bdbdbd"/><circle cx="1335" cy="394.7" r="2.3" fill="#bdbdbd"/><circle cx="1328" cy="410.3" r="2.3" fill="#bdbdbd"/><rect x="1311.0" y="429.5" width="34" height="11" rx="2.2" fill="#d9d9d9" stroke="#9a9a9a" stroke-width="0.6"/><path d="M1316.2 431.0 L1313.8 439.0" stroke="#8f8f8f" stroke-width="1.1"/><path d="M1321.2 431.0 L1318.8 439.0" stroke="#8f8f8f" stroke-width="1.1"/><path d="M1337.2 431.0 L1334.8 439.0" stroke="#8f8f8f" stroke-width="1.1"/><path d="M1342.2 431.0 L1339.8 439.0" stroke="#8f8f8f" stroke-width="1.1"/><circle cx="1327" cy="435" r="4" fill="#e8b030"/><path d="M1325 433 L1332 438" stroke="#c04020" stroke-width="1.3"/><circle cx="1322" cy="427.2" r="2.3" fill="#bdbdbd"/><circle cx="1335" cy="427.2" r="2.3" fill="#bdbdbd"/><circle cx="1328" cy="442.8" r="2.3" fill="#bdbdbd"/><rect x="1311.0" y="462.0" width="34" height="11" rx="2.2" fill="#d9d9d9" stroke="#9a9a9a" stroke-width="0.6"/><path d="M1316.2 463.5 L1313.8 471.5" stroke="#8f8f8f" stroke-width="1.1"/><path d="M1321.2 463.5 L1318.8 471.5" stroke="#8f8f8f" stroke-width="1.1"/><path d="M1337.2 463.5 L1334.8 471.5" stroke="#8f8f8f" stroke-width="1.1"/><path d="M1342.2 463.5 L1339.8 471.5" stroke="#8f8f8f" stroke-width="1.1"/><circle cx="1328" cy="468.5" r="4" fill="#9aa8b8"/><path d="M1329 463.5 L1332 466.5" stroke="#ddd" stroke-width="1.2"/><circle cx="1322" cy="459.7" r="2.3" fill="#bdbdbd"/><circle cx="1335" cy="459.7" r="2.3" fill="#bdbdbd"/><circle cx="1328" cy="475.3" r="2.3" fill="#bdbdbd"/><rect x="1301.0" y="499.0" width="34" height="11" rx="2.2" fill="#d9d9d9" stroke="#9a9a9a" stroke-width="0.6"/><path d="M1306.2 500.5 L1303.8 508.5" stroke="#8f8f8f" stroke-width="1.1"/><path d="M1311.2 500.5 L1308.8 508.5" stroke="#8f8f8f" stroke-width="1.1"/><path d="M1327.2 500.5 L1324.8 508.5" stroke="#8f8f8f" stroke-width="1.1"/><path d="M1332.2 500.5 L1329.8 508.5" stroke="#8f8f8f" stroke-width="1.1"/><path d="M1314 500.5 H1322 V506.5 L1318 509.5 L1314 506.5Z" fill="#b8641a"/><circle cx="1318" cy="504.5" r="1.8" fill="#e05010"/><circle cx="1318" cy="496.7" r="2.3" fill="#bdbdbd"/><circle cx="1318" cy="512.3" r="2.3" fill="#bdbdbd"/><rect x="1384.5" y="549.5" width="34" height="11" rx="2.2" fill="#d9d9d9" stroke="#9a9a9a" stroke-width="0.6"/><path d="M1389.7 551.0 L1387.3 559.0" stroke="#8f8f8f" stroke-width="1.1"/><path d="M1394.7 551.0 L1392.3 559.0" stroke="#8f8f8f" stroke-width="1.1"/><path d="M1410.7 551.0 L1408.3 559.0" stroke="#8f8f8f" stroke-width="1.1"/><path d="M1415.7 551.0 L1413.3 559.0" stroke="#8f8f8f" stroke-width="1.1"/><path d="M1397.5 551 H1405.5 V557 L1401.5 560 L1397.5 557Z" fill="#b8641a"/><circle cx="1401.5" cy="555" r="1.8" fill="#e05010"/><circle cx="1401.5" cy="547.2" r="2.3" fill="#bdbdbd"/><circle cx="1401.5" cy="562.8" r="2.3" fill="#bdbdbd"/><rect x="1484.0" y="555.0" width="34" height="11" rx="2.2" fill="#d9d9d9" stroke="#9a9a9a" stroke-width="0.6"/><path d="M1489.2 556.5 L1486.8 564.5" stroke="#8f8f8f" stroke-width="1.1"/><path d="M1494.2 556.5 L1491.8 564.5" stroke="#8f8f8f" stroke-width="1.1"/><path d="M1510.2 556.5 L1507.8 564.5" stroke="#8f8f8f" stroke-width="1.1"/><path d="M1515.2 556.5 L1512.8 564.5" stroke="#8f8f8f" stroke-width="1.1"/><path d="M1497 556.5 H1505 V562.5 L1501 565.5 L1497 562.5Z" fill="#b8641a"/><circle cx="1501" cy="560.5" r="1.8" fill="#e05010"/><circle cx="1501" cy="552.7" r="2.3" fill="#bdbdbd"/><circle cx="1501" cy="568.3" r="2.3" fill="#bdbdbd"/><rect x="1574.0" y="548.5" width="34" height="11" rx="2.2" fill="#d9d9d9" stroke="#9a9a9a" stroke-width="0.6"/><path d="M1579.2 550.0 L1576.8 558.0" stroke="#8f8f8f" stroke-width="1.1"/><path d="M1584.2 550.0 L1581.8 558.0" stroke="#8f8f8f" stroke-width="1.1"/><path d="M1600.2 550.0 L1597.8 558.0" stroke="#8f8f8f" stroke-width="1.1"/><path d="M1605.2 550.0 L1602.8 558.0" stroke="#8f8f8f" stroke-width="1.1"/><path d="M1587 550 H1595 V556 L1591 559 L1587 556Z" fill="#b8641a"/><circle cx="1591" cy="554" r="1.8" fill="#e05010"/><circle cx="1591" cy="546.2" r="2.3" fill="#bdbdbd"/><circle cx="1591" cy="561.8" r="2.3" fill="#bdbdbd"/><rect x="1663.0" y="548.5" width="34" height="11" rx="2.2" fill="#d9d9d9" stroke="#9a9a9a" stroke-width="0.6"/><path d="M1668.2 550.0 L1665.8 558.0" stroke="#8f8f8f" stroke-width="1.1"/><path d="M1673.2 550.0 L1670.8 558.0" stroke="#8f8f8f" stroke-width="1.1"/><path d="M1689.2 550.0 L1686.8 558.0" stroke="#8f8f8f" stroke-width="1.1"/><path d="M1694.2 550.0 L1691.8 558.0" stroke="#8f8f8f" stroke-width="1.1"/><path d="M1676 550 H1684 V556 L1680 559 L1676 556Z" fill="#b8641a"/><circle cx="1680" cy="554" r="1.8" fill="#e05010"/><circle cx="1680" cy="546.2" r="2.3" fill="#bdbdbd"/><circle cx="1680" cy="561.8" r="2.3" fill="#bdbdbd"/><rect x="1357.0" y="730.0" width="28" height="4" rx="2" fill="#d0d0d0"/><rect x="1354.0" y="734.5" width="34" height="11" rx="5.5" fill="#d9d9d9" stroke="#888" stroke-width="0.6"/><path d="M1359.2 736.0 L1356.8 744.0" stroke="#8f8f8f" stroke-width="1.1"/><path d="M1364.2 736.0 L1361.8 744.0" stroke="#8f8f8f" stroke-width="1.1"/><path d="M1380.2 736.0 L1377.8 744.0" stroke="#8f8f8f" stroke-width="1.1"/><path d="M1385.2 736.0 L1382.8 744.0" stroke="#8f8f8f" stroke-width="1.1"/><path d="M1367 737 L1372 740 L1368 744" stroke="#c03030" stroke-width="1.3" fill="none"/><circle cx="1374" cy="739" r="1.3" fill="#888"/><circle cx="1371" cy="732.2" r="2.3" fill="#bdbdbd"/><circle cx="1371" cy="747.8" r="2.3" fill="#bdbdbd"/><rect x="1354.0" y="761.0" width="34" height="11" rx="2.2" fill="#d9d9d9" stroke="#9a9a9a" stroke-width="0.6"/><path d="M1359.2 762.5 L1356.8 770.5" stroke="#8f8f8f" stroke-width="1.1"/><path d="M1364.2 762.5 L1361.8 770.5" stroke="#8f8f8f" stroke-width="1.1"/><path d="M1380.2 762.5 L1377.8 770.5" stroke="#8f8f8f" stroke-width="1.1"/><path d="M1385.2 762.5 L1382.8 770.5" stroke="#8f8f8f" stroke-width="1.1"/><path d="M1366 767.5 L1370 763.5 M1372 768.5 L1376 764.5" stroke="#4a6aa8" stroke-width="2"/><circle cx="1371" cy="766.5" r="2" fill="#6a8ac8"/><circle cx="1371" cy="758.7" r="2.3" fill="#bdbdbd"/><circle cx="1371" cy="774.3" r="2.3" fill="#bdbdbd"/><rect x="1191.7" y="793.5" width="34" height="11" rx="2.2" fill="#f6a623" stroke="#c07a10" stroke-width="0.6"/><path d="M1196.9 795.0 L1194.5 803.0" stroke="#b06a10" stroke-width="1.1"/><path d="M1201.9 795.0 L1199.5 803.0" stroke="#b06a10" stroke-width="1.1"/><path d="M1217.9 795.0 L1215.5 803.0" stroke="#b06a10" stroke-width="1.1"/><path d="M1222.9 795.0 L1220.5 803.0" stroke="#b06a10" stroke-width="1.1"/><circle cx="1208.7" cy="791.2" r="2.3" fill="#bdbdbd"/><circle cx="1208.7" cy="806.8" r="2.3" fill="#bdbdbd"/><rect x="1191.7" y="826.0" width="34" height="11" rx="2.2" fill="#d9d9d9" stroke="#9a9a9a" stroke-width="0.6"/><path d="M1196.9 827.5 L1194.5 835.5" stroke="#8f8f8f" stroke-width="1.1"/><path d="M1201.9 827.5 L1199.5 835.5" stroke="#8f8f8f" stroke-width="1.1"/><path d="M1217.9 827.5 L1215.5 835.5" stroke="#8f8f8f" stroke-width="1.1"/><path d="M1222.9 827.5 L1220.5 835.5" stroke="#8f8f8f" stroke-width="1.1"/><path d="M1203.7 832.5 L1207.7 828.5 M1209.7 833.5 L1213.7 829.5" stroke="#4a6aa8" stroke-width="2"/><circle cx="1208.7" cy="831.5" r="2" fill="#6a8ac8"/><circle cx="1208.7" cy="823.7" r="2.3" fill="#bdbdbd"/><circle cx="1208.7" cy="839.3" r="2.3" fill="#bdbdbd"/><rect x="1304.5" y="793.5" width="34" height="11" rx="2.2" fill="#f6a623" stroke="#c07a10" stroke-width="0.6"/><path d="M1309.7 795.0 L1307.3 803.0" stroke="#b06a10" stroke-width="1.1"/><path d="M1314.7 795.0 L1312.3 803.0" stroke="#b06a10" stroke-width="1.1"/><path d="M1330.7 795.0 L1328.3 803.0" stroke="#b06a10" stroke-width="1.1"/><path d="M1335.7 795.0 L1333.3 803.0" stroke="#b06a10" stroke-width="1.1"/><circle cx="1321.5" cy="791.2" r="2.3" fill="#bdbdbd"/><circle cx="1321.5" cy="806.8" r="2.3" fill="#bdbdbd"/><rect x="1304.5" y="826.0" width="34" height="11" rx="2.2" fill="#d9d9d9" stroke="#9a9a9a" stroke-width="0.6"/><path d="M1309.7 827.5 L1307.3 835.5" stroke="#8f8f8f" stroke-width="1.1"/><path d="M1314.7 827.5 L1312.3 835.5" stroke="#8f8f8f" stroke-width="1.1"/><path d="M1330.7 827.5 L1328.3 835.5" stroke="#8f8f8f" stroke-width="1.1"/><path d="M1335.7 827.5 L1333.3 835.5" stroke="#8f8f8f" stroke-width="1.1"/><path d="M1316.5 832.5 L1320.5 828.5 M1322.5 833.5 L1326.5 829.5" stroke="#4a6aa8" stroke-width="2"/><circle cx="1321.5" cy="831.5" r="2" fill="#6a8ac8"/><circle cx="1321.5" cy="823.7" r="2.3" fill="#bdbdbd"/><circle cx="1321.5" cy="839.3" r="2.3" fill="#bdbdbd"/><rect x="1543.5" y="793.5" width="34" height="11" rx="2.2" fill="#f6a623" stroke="#c07a10" stroke-width="0.6"/><path d="M1548.7 795.0 L1546.3 803.0" stroke="#b06a10" stroke-width="1.1"/><path d="M1553.7 795.0 L1551.3 803.0" stroke="#b06a10" stroke-width="1.1"/><path d="M1569.7 795.0 L1567.3 803.0" stroke="#b06a10" stroke-width="1.1"/><path d="M1574.7 795.0 L1572.3 803.0" stroke="#b06a10" stroke-width="1.1"/><circle cx="1560.5" cy="791.2" r="2.3" fill="#bdbdbd"/><circle cx="1560.5" cy="806.8" r="2.3" fill="#bdbdbd"/><rect x="1543.5" y="826.0" width="34" height="11" rx="2.2" fill="#d9d9d9" stroke="#9a9a9a" stroke-width="0.6"/><path d="M1548.7 827.5 L1546.3 835.5" stroke="#8f8f8f" stroke-width="1.1"/><path d="M1553.7 827.5 L1551.3 835.5" stroke="#8f8f8f" stroke-width="1.1"/><path d="M1569.7 827.5 L1567.3 835.5" stroke="#8f8f8f" stroke-width="1.1"/><path d="M1574.7 827.5 L1572.3 835.5" stroke="#8f8f8f" stroke-width="1.1"/><path d="M1555.5 832.5 L1559.5 828.5 M1561.5 833.5 L1565.5 829.5" stroke="#4a6aa8" stroke-width="2"/><circle cx="1560.5" cy="831.5" r="2" fill="#6a8ac8"/><circle cx="1560.5" cy="823.7" r="2.3" fill="#bdbdbd"/><circle cx="1560.5" cy="839.3" r="2.3" fill="#bdbdbd"/><rect x="1427.0" y="793.5" width="34" height="11" rx="2.2" fill="#f6a623" stroke="#c07a10" stroke-width="0.6"/><path d="M1432.2 795.0 L1429.8 803.0" stroke="#b06a10" stroke-width="1.1"/><path d="M1437.2 795.0 L1434.8 803.0" stroke="#b06a10" stroke-width="1.1"/><path d="M1453.2 795.0 L1450.8 803.0" stroke="#b06a10" stroke-width="1.1"/><path d="M1458.2 795.0 L1455.8 803.0" stroke="#b06a10" stroke-width="1.1"/><circle cx="1444" cy="799" r="3.5" fill="#f8e070" stroke="#fff" stroke-width="0.8"/><circle cx="1444" cy="791.2" r="2.3" fill="#bdbdbd"/><circle cx="1444" cy="806.8" r="2.3" fill="#bdbdbd"/><rect x="1357.0" y="906.5" width="28" height="4" rx="2" fill="#d0d0d0"/><rect x="1354.0" y="911.0" width="34" height="11" rx="5.5" fill="#d9d9d9" stroke="#888" stroke-width="0.6"/><path d="M1359.2 912.5 L1356.8 920.5" stroke="#8f8f8f" stroke-width="1.1"/><path d="M1364.2 912.5 L1361.8 920.5" stroke="#8f8f8f" stroke-width="1.1"/><path d="M1380.2 912.5 L1377.8 920.5" stroke="#8f8f8f" stroke-width="1.1"/><path d="M1385.2 912.5 L1382.8 920.5" stroke="#8f8f8f" stroke-width="1.1"/><path d="M1367 913.5 L1372 916.5 L1368 920.5" stroke="#c03030" stroke-width="1.3" fill="none"/><circle cx="1374" cy="915.5" r="1.3" fill="#888"/><circle cx="1371" cy="908.7" r="2.3" fill="#bdbdbd"/><circle cx="1371" cy="924.3" r="2.3" fill="#bdbdbd"/><circle cx="1371" cy="951" r="26.5" fill="#6b5339"/><circle cx="1371" cy="951" r="19" fill="#b48ae6"/><rect x="1354" y="943.5" width="34" height="14" rx="2" fill="#f0d028"/><rect x="1356" y="945.5" width="30" height="10" rx="1" fill="#d5d5d5"/><rect x="1382" y="945.5" width="4" height="10" fill="#3aa0e0"/><path d="M1361.2 947.0 L1358.8 954.0" stroke="#8a8a8a" stroke-width="1.1"/><path d="M1366.2 947.0 L1363.8 954.0" stroke="#8a8a8a" stroke-width="1.1"/><path d="M1378.2 947.0 L1375.8 954.0" stroke="#8a8a8a" stroke-width="1.1"/><path d="M1383.2 947.0 L1380.8 954.0" stroke="#8a8a8a" stroke-width="1.1"/><path d="M1367 948 L1371 951 L1375 948 M1369 952 H1374" stroke="#333" stroke-width="1.4" fill="none"/><circle cx="1371" cy="941" r="2.3" fill="#bdbdbd"/><circle cx="1394.5" cy="747.5" r="3.3" fill="#e8c020"/><path d="M1394.5 745.5 V748.5" stroke="#222" stroke-width="1.2"/></svg>
<div class="t" style="left:1349.0px;top:299.8px;font-size:8.5px;color:#c9c9c9;transform:scaleX(0.830);transform-origin:0 0;">object_merge1</div>
<div class="t" style="left:1348.0px;top:331.8px;font-size:8.5px;color:#c9c9c9;transform:scaleX(0.830);transform-origin:0 0;">transform1</div>
<div class="t" style="left:1348.0px;top:364.8px;font-size:8.5px;color:#c9c9c9;transform:scaleX(0.830);transform-origin:0 0;">edit1</div>
<div class="t" style="left:1348.0px;top:397.8px;font-size:8.5px;color:#c9c9c9;transform:scaleX(0.830);transform-origin:0 0;">polyextrude1</div>
<div class="t" style="left:1348.0px;top:429.8px;font-size:8.5px;color:#c9c9c9;transform:scaleX(0.830);transform-origin:0 0;">polyextrude2</div>
<div class="t" style="left:1348.0px;top:462.8px;font-size:8.5px;color:#c9c9c9;transform:scaleX(0.830);transform-origin:0 0;">edit2</div>
<div class="t" style="left:1337.0px;top:499.8px;font-size:8.5px;color:#c9c9c9;transform:scaleX(0.830);transform-origin:0 0;">material4</div>
<div class="t" style="left:1421.0px;top:550.3px;font-size:8.5px;color:#c9c9c9;transform:scaleX(0.830);transform-origin:0 0;">material1</div>
<div class="t" style="left:1521.0px;top:555.8px;font-size:8.5px;color:#c9c9c9;transform:scaleX(0.830);transform-origin:0 0;">material2</div>
<div class="t" style="left:1610.0px;top:549.3px;font-size:8.5px;color:#c9c9c9;transform:scaleX(0.830);transform-origin:0 0;">material3</div>
<div class="t" style="left:1699.0px;top:549.3px;font-size:8.5px;color:#c9c9c9;transform:scaleX(0.830);transform-origin:0 0;">material5</div>
<div class="t" style="left:1390.0px;top:734.8px;font-size:8.5px;color:#c9c9c9;transform:scaleX(0.830);transform-origin:0 0;">merge1</div>
<div class="t" style="left:1390.0px;top:761.8px;font-size:8.5px;color:#c9c9c9;transform:scaleX(0.830);transform-origin:0 0;">final_scale</div>
<div class="t" style="left:1228.0px;top:793.8px;font-size:8.5px;color:#c9c9c9;transform:scaleX(0.830);transform-origin:0 0;">left_outer_vactube</div>
<div class="t" style="left:1340.0px;top:793.8px;font-size:8.5px;color:#c9c9c9;transform:scaleX(0.830);transform-origin:0 0;">left_outer_vactube1</div>
<div class="t" style="left:1464.0px;top:793.8px;font-size:8.5px;color:#c9c9c9;transform:scaleX(0.830);transform-origin:0 0;">right_inner_vactube</div>
<div class="t" style="left:1580.0px;top:793.8px;font-size:8.5px;color:#c9c9c9;transform:scaleX(0.830);transform-origin:0 0;">right_outer_vactube</div>
<div class="t" style="left:1228.0px;top:825.8px;font-size:8.5px;color:#c9c9c9;transform:scaleX(0.830);transform-origin:0 0;">transform10</div>
<div class="t" style="left:1340.0px;top:825.8px;font-size:8.5px;color:#c9c9c9;transform:scaleX(0.830);transform-origin:0 0;">transform11</div>
<div class="t" style="left:1580.0px;top:826.8px;font-size:8.5px;color:#c9c9c9;transform:scaleX(0.830);transform-origin:0 0;">transform12</div>
<div class="t" style="left:1390.0px;top:911.8px;font-size:8.5px;color:#c9c9c9;transform:scaleX(0.830);transform-origin:0 0;">merge3</div>
<div class="t" style="left:1390.0px;top:945.8px;font-size:8.5px;color:#c9c9c9;transform:scaleX(0.830);transform-origin:0 0;">output1</div>
<div class="t" style="left:1390.0px;top:753.2px;font-size:8px;color:#6c6c6c;transform:scaleX(0.830);transform-origin:0 0;">Transform</div>
<div class="t" style="left:1228.0px;top:786.7px;font-size:8px;color:#6c6c6c;transform:scaleX(0.830);transform-origin:0 0;">Copy and Transform</div>
<div class="t" style="left:1340.0px;top:786.7px;font-size:8px;color:#6c6c6c;transform:scaleX(0.830);transform-origin:0 0;">Copy and Transform</div>
<div class="t" style="left:1464.0px;top:786.7px;font-size:8px;color:#6c6c6c;transform:scaleX(0.830);transform-origin:0 0;">Null</div>
<div class="t" style="left:1580.0px;top:786.7px;font-size:8px;color:#6c6c6c;transform:scaleX(0.830);transform-origin:0 0;">Copy and Transform</div>
<div class="t" style="left:1390.0px;top:959.2px;font-size:8px;color:#7b9fd6;transform:scaleX(0.830);transform-origin:0 0;">Output #0</div>
<div class="a" style="left:1360px;top:515px;width:83px;height:11px;background:#a9d1fa;border-radius:5px"></div><div class="t" style="left:1365.0px;top:515.2px;font-size:11px;color:#0a0a20;font-weight:bold;transform:scaleX(1.090);transform-origin:0 0;">+</div><div class="t" style="left:1373.0px;top:515.9px;font-size:9px;color:#1a2f6a;transform:scaleX(0.860);transform-origin:0 0;">glass_tube_large</div>
<div class="a" style="left:1459px;top:515px;width:83px;height:11px;background:#a9d1fa;border-radius:5px"></div><div class="t" style="left:1464.0px;top:515.2px;font-size:11px;color:#0a0a20;font-weight:bold;transform:scaleX(1.090);transform-origin:0 0;">+</div><div class="t" style="left:1472.0px;top:515.9px;font-size:9px;color:#1a2f6a;transform:scaleX(0.860);transform-origin:0 0;">disc_plates</div>
<div class="a" style="left:1558px;top:515px;width:72px;height:11px;background:#a9d1fa;border-radius:5px"></div><div class="t" style="left:1563.0px;top:515.2px;font-size:11px;color:#0a0a20;font-weight:bold;transform:scaleX(1.090);transform-origin:0 0;">+</div><div class="t" style="left:1571.0px;top:515.9px;font-size:9px;color:#1a2f6a;transform:scaleX(0.860);transform-origin:0 0;">round_plate</div>
<div class="a" style="left:1647px;top:515px;width:72px;height:11px;background:#a9d1fa;border-radius:5px"></div><div class="t" style="left:1652.0px;top:515.2px;font-size:11px;color:#0a0a20;font-weight:bold;transform:scaleX(1.090);transform-origin:0 0;">+</div><div class="t" style="left:1660.0px;top:515.9px;font-size:9px;color:#1a2f6a;transform:scaleX(0.860);transform-origin:0 0;">lower_rods</div>
<div class="a" style="left:1743px;top:515px;width:82px;height:11px;background:#a9d1fa;border-radius:5px"></div><div class="t" style="left:1748.0px;top:515.2px;font-size:11px;color:#0a0a20;font-weight:bold;transform:scaleX(1.090);transform-origin:0 0;">+</div><div class="t" style="left:1756.0px;top:515.9px;font-size:9px;color:#1a2f6a;transform:scaleX(0.860);transform-origin:0 0;">longer_rods</div>
<svg class="a" style="left:1411px;top:436px" width="14" height="20"><path d="M1 1 V16 L5 12 L8 19 L10.5 18 L7.5 11 L13 11Z" fill="#fff" stroke="#000" stroke-width="1"/></svg>
<div class="a" style="left:6px;top:208px;width:25px;height:72px;background:#474747;border:1px solid #222"></div>
<svg class="a" style="left:7px;top:209px" width="23" height="23" viewBox="0 0 23 23"><path d="M4 16 L9 5 L14 16Z" fill="#e8d060"/><ellipse cx="9" cy="16" rx="5" ry="2" fill="#c8b040"/><circle cx="14" cy="8" r="6" fill="#555" opacity="0.9"/><path d="M4 16 L9 5 L14 16Z" fill="#e8d060"/><path d="M17 14 L21 18 L17 22Z" fill="#999"/></svg>
<div class="a" style="left:6px;top:232px;width:25px;height:24px;background:#c08a2a;border:1px solid #6a4a10"></div><svg class="a" style="left:7px;top:233px" width="23" height="23" viewBox="0 0 23 23"><path d="M11 2 L19 10 L11 18 L3 10Z" fill="#777"/><path d="M11 10 L15 14 L11 18 L7 14Z" fill="#f0e070"/><path d="M11 2 L15 6 L11 10 L7 6Z" fill="#aaa"/><path d="M17 14 L21 18 L17 22Z" fill="#222"/></svg>
<svg class="a" style="left:7px;top:257px" width="23" height="23" viewBox="0 0 23 23"><path d="M5 6 L12 3 L18 8 L16 16 L9 19 L4 13Z" fill="#e8d030"/><path d="M5 6 L12 3 L18 8 L11 11Z" fill="#f8f0a0"/><path d="M17 14 L21 18 L17 22Z" fill="#999"/></svg>
<div class="a" style="left:3px;top:286px;width:31px;height:1px;background:#2c2c2c;"></div>
<div class="a" style="left:6px;top:294px;width:25px;height:24px;background:#c08a2a;border:1px solid #6a4a10"></div><svg class="a" style="left:7px;top:295px" width="23" height="23" viewBox="0 0 23 23"><path d="M5 2 L5 17 L9 13 L12 20 L15 19 L12 12 L17 12Z" fill="#eee" stroke="#555" stroke-width="0.6"/><path d="M17 14 L21 18 L17 22Z" fill="#222"/></svg>
<svg class="a" style="left:7px;top:322px" width="23" height="23" viewBox="0 0 23 23"><path d="M3 12 L7 7 L7 17Z M19 12 L15 7 L15 17Z M11 21 L6 17 H16Z" fill="#c02020"/><path d="M7 7 L11 4 L15 7 V14 L11 16 L7 14Z" fill="#bbb"/></svg>
<svg class="a" style="left:7px;top:350px" width="23" height="23" viewBox="0 0 23 23"><path d="M3 14 C3 19,8 20,11 19 M19 14 C19 19,14 20,11 19" fill="none" stroke="#c03020" stroke-width="3"/><circle cx="11" cy="9" r="5" fill="#c8c8c8"/></svg>
<svg class="a" style="left:7px;top:378px" width="23" height="23" viewBox="0 0 23 23"><path d="M11 2 L8 6 H14Z M3 16 L7 19 V13Z M19 16 L15 19 V13Z" fill="#c02020"/><rect x="7" y="9" width="8" height="9" fill="#888"/><circle cx="11" cy="13" r="2" fill="#bbb"/></svg>
<svg class="a" style="left:7px;top:406px" width="23" height="23" viewBox="0 0 23 23"><path d="M11 4 L7 9 H15Z" fill="#40c040"/><path d="M19 14 L14 11 V17Z" fill="#c02020"/><path d="M3 16 L8 13 V19Z" fill="#4070d0"/><circle cx="11" cy="13" r="4" fill="#e8d050"/><circle cx="11" cy="13" r="2" fill="#888"/><path d="M17 14 L21 18 L17 22Z" fill="#999"/></svg>
<div class="a" style="left:3px;top:436px;width:31px;height:1px;background:#2c2c2c;"></div>
<svg class="a" style="left:7px;top:444px" width="23" height="23" viewBox="0 0 23 23"><path d="M3 10 C3 2,15 2,15 10 V13 H11 V10 C11 6,7 6,7 10 V13 H3Z" fill="#c03838"/><rect x="3" y="12" width="4" height="3" fill="#eee"/><rect x="11" y="12" width="4" height="3" fill="#eee"/><path d="M8 10 H20 M8 15 H20 M12 6 V20 M17 6 V20" stroke="#ddd" stroke-width="1"/><path d="M17 14 L21 18 L17 22Z" fill="#999"/></svg>
<svg class="a" style="left:7px;top:471px" width="23" height="23" viewBox="0 0 23 23"><path d="M3 10 C3 2,15 2,15 10 V13 H11 V10 C11 6,7 6,7 10 V13 H3Z" fill="#c03838"/><rect x="3" y="12" width="4" height="3" fill="#eee"/><rect x="11" y="12" width="4" height="3" fill="#eee"/><path d="M2 20 C8 12,14 18,20 12" fill="none" stroke="#ddd" stroke-width="1"/><path d="M17 14 L21 18 L17 22Z" fill="#999"/></svg>
<svg class="a" style="left:7px;top:499px" width="23" height="23" viewBox="0 0 23 23"><path d="M3 10 C3 2,15 2,15 10 V13 H11 V10 C11 6,7 6,7 10 V13 H3Z" fill="#c03838"/><rect x="3" y="12" width="4" height="3" fill="#eee"/><rect x="11" y="12" width="4" height="3" fill="#eee"/><circle cx="16" cy="17" r="3.5" fill="#bbb"/><path d="M17 14 L21 18 L17 22Z" fill="#999"/></svg>
<svg class="a" style="left:7px;top:528px" width="23" height="23" viewBox="0 0 23 23"><path d="M2 12 C2 0,20 0,20 12 V17 H14 V12 C14 7,8 7,8 12 V17 H2Z" fill="#c03838"/><rect x="2" y="16" width="6" height="4" fill="#eee"/><rect x="14" y="16" width="6" height="4" fill="#eee"/><path d="M17 14 L21 18 L17 22Z" fill="#999"/></svg>
<div class="a" style="left:3px;top:558px;width:31px;height:1px;background:#2c2c2c;"></div>
<svg class="a" style="left:7px;top:564px" width="23" height="23" viewBox="0 0 23 23"><circle cx="8" cy="8" r="4.5" fill="#222" stroke="#888"/><circle cx="14" cy="7" r="4" fill="#222" stroke="#888"/><rect x="5" y="11" width="12" height="8" fill="#333" stroke="#888" stroke-width="0.8"/><path d="M17 13 L21 11 V19 L17 17Z" fill="#444"/></svg>
<svg class="a" style="left:7px;top:592px" width="23" height="23" viewBox="0 0 23 23"><circle cx="9" cy="9" r="7" fill="none" stroke="#ddd" stroke-width="1.3"/><path d="M9 2 V16 M2 9 H16" stroke="#ddd" stroke-width="0.8"/><rect x="10" y="10" width="10" height="10" fill="#a05050" stroke="#d08080"/></svg>
<svg class="a" style="left:7px;top:621px" width="23" height="23" viewBox="0 0 23 23"><ellipse cx="11" cy="17" rx="9" ry="4" fill="#bcd8e0"/><rect x="5" y="5" width="12" height="11" rx="3" fill="#333"/><path d="M6 7 H16 M6 10 H16 M6 13 H16" stroke="#999" stroke-width="1"/><path d="M17 14 L21 18 L17 22Z" fill="#999"/></svg>
<svg class="a" style="left:7px;top:961px" width="23" height="23" viewBox="0 0 23 23"><path d="M3 12 L13 6 L19 10 L9 16Z" fill="#ddd"/><path d="M3 12 L9 16 V19 L3 15Z" fill="#aaa"/><path d="M6 8 L14 3 L17 6" fill="none" stroke="#c33" stroke-width="1"/><path d="M17 14 L21 18 L17 22Z" fill="#999"/></svg>
<svg class="a" style="left:7px;top:987px" width="23" height="23" viewBox="0 0 23 23"><ellipse cx="10" cy="11" rx="8" ry="7" fill="#ccc"/><circle cx="7" cy="9" r="2" fill="#777"/><circle cx="13" cy="9" r="2" fill="#777"/><circle cx="10" cy="14" r="2" fill="#777"/><path d="M17 14 L21 18 L17 22Z" fill="#999"/></svg>
<div class="a" style="left:1058px;top:192px;width:26px;height:823px;background:#3a3a3a;"></div>
<div class="a" style="left:1059px;top:193px;width:25px;height:11px;background:linear-gradient(#444,#383838);border-bottom:1px solid #222"></div>
<svg class="a" style="left:1075px;top:195px" width="7" height="7" viewBox="0 0 7 7"><path d="M0 0 V7 L6 3.5Z" fill="#0a0a0a"/></svg>
<svg class="a" style="left:1060px;top:206px" width="22" height="22" viewBox="0 0 22 22"><path d="M3 10 L11 6 L19 10 L11 14Z" fill="none" stroke="#ddd" stroke-width="1.2"/><path d="M7 10 L11 8 L15 10 L11 12Z" fill="none" stroke="#ddd"/><path d="M17 14 L21 18 L17 22Z" fill="#999"/></svg>
<svg class="a" style="left:1060px;top:230px" width="22" height="22" viewBox="0 0 22 22"><path d="M3 6 L15 4 L19 16 L7 18Z" fill="none" stroke="#5a9a4a" stroke-width="1.5"/><path d="M8 14 C6 9,14 7,14 11 C14 13,10 13,10 11" fill="none" stroke="#8ad070" stroke-width="1.3"/><path d="M17 14 L21 18 L17 22Z" fill="#999"/></svg>
<svg class="a" style="left:1060px;top:254px" width="22" height="22" viewBox="0 0 22 22"><path d="M6 10 V7 C6 2,16 2,16 7 V10" fill="none" stroke="#ddd" stroke-width="2"/><rect x="4" y="10" width="14" height="10" fill="#e8e8e8"/><path d="M4 13 H18 M4 16 H18" stroke="#999"/></svg>
<div class="a" style="left:1060px;top:279px;width:23px;height:24px;background:#c08a2a;border:1px solid #6a4a10"></div><svg class="a" style="left:1060px;top:280px" width="22" height="22" viewBox="0 0 22 22"><circle cx="11" cy="9" r="6" fill="#ddd"/><rect x="8" y="14" width="6" height="5" fill="#888"/><path d="M8 6 L14 12 M14 6 L8 12" stroke="#333" stroke-width="1.6"/></svg>
<svg class="a" style="left:1060px;top:304px" width="22" height="22" viewBox="0 0 22 22"><circle cx="11" cy="11" r="8" fill="#ccc"/><circle cx="12" cy="11" r="6" fill="#eee"/><path d="M12 5 V17" stroke="#999" stroke-width="1.5"/><path d="M17 14 L21 18 L17 22Z" fill="#999"/></svg>
<svg class="a" style="left:1060px;top:328px" width="22" height="22" viewBox="0 0 22 22"><circle cx="11" cy="9" r="5.5" fill="#eee"/><rect x="8.5" y="14" width="5" height="5" fill="#777"/><path d="M17 14 L21 18 L17 22Z" fill="#999"/></svg>
<svg class="a" style="left:1060px;top:352px" width="22" height="22" viewBox="0 0 22 22"><circle cx="11" cy="9" r="5.5" fill="#eee"/><path d="M11 6 V12 M8 9 H14" stroke="#333" stroke-width="1.8"/><rect x="8.5" y="14" width="5" height="5" fill="#777"/><path d="M17 14 L21 18 L17 22Z" fill="#999"/></svg>
<svg class="a" style="left:1060px;top:376px" width="22" height="22" viewBox="0 0 22 22"><circle cx="11" cy="7" r="5" fill="#eee"/><path d="M11 4 V10 M8 7 H14" stroke="#333" stroke-width="1.8"/><rect x="9" y="12" width="4" height="4" fill="#777"/><ellipse cx="11" cy="18" rx="7" ry="2.5" fill="none" stroke="#ddd" stroke-width="1.5"/><path d="M17 14 L21 18 L17 22Z" fill="#999"/></svg>
<div class="a" style="left:1060px;top:403px;width:23px;height:24px;background:#c08a2a;border:1px solid #6a4a10"></div><svg class="a" style="left:1060px;top:404px" width="22" height="22" viewBox="0 0 22 22"><circle cx="11" cy="11" r="8" fill="#eee"/><path d="M3 11 A8 8 0 0 1 11 3 V11Z M11 11 H19 A8 8 0 0 1 11 19Z" fill="#222"/><path d="M17 14 L21 18 L17 22Z" fill="#999"/></svg>
<svg class="a" style="left:1060px;top:429px" width="22" height="22" viewBox="0 0 22 22"><path d="M2 8 C6 4,14 4,18 9 C14 13,6 13,2 8Z" fill="none" stroke="#ddd" stroke-width="1.5"/><circle cx="10" cy="8.5" r="2.5" fill="#ddd"/><path d="M2 5 L18 13" stroke="#ddd" stroke-width="1.3"/><path d="M17 14 L21 18 L17 22Z" fill="#999"/></svg>
<div class="a" style="left:1059px;top:457px;width:25px;height:1px;background:#2c2c2c;"></div>
<svg class="a" style="left:1060px;top:459px" width="22" height="22" viewBox="0 0 22 22"><circle cx="11" cy="11" r="3" fill="#ddd"/></svg>
<svg class="a" style="left:1060px;top:485px" width="22" height="22" viewBox="0 0 22 22"><path d="M4 18 L15 7" stroke="#ddd" stroke-width="1.2"/><circle cx="5" cy="17" r="2.5" fill="#ddd"/><circle cx="15" cy="7" r="2" fill="#ddd"/></svg>
<svg class="a" style="left:1060px;top:509px" width="22" height="22" viewBox="0 0 22 22"><path d="M4 18 L16 5" stroke="#ddd" stroke-width="1.5"/><circle cx="16" cy="5" r="2.5" fill="#fff"/></svg>
<svg class="a" style="left:1060px;top:534px" width="22" height="22" viewBox="0 0 22 22"><circle cx="6" cy="16" r="2.5" fill="#ddd"/><text x="14" y="11" font-size="9" font-weight="bold" text-anchor="middle" fill="#eee" font-family="Liberation Sans">12</text></svg>
<svg class="a" style="left:1060px;top:559px" width="22" height="22" viewBox="0 0 22 22"><path d="M3 14 L11 9 L19 14 L11 19Z" fill="#ccc"/><path d="M11 14 L15 4" stroke="#eee" stroke-width="1.2"/></svg>
<svg class="a" style="left:1060px;top:584px" width="22" height="22" viewBox="0 0 22 22"><path d="M3 14 L11 9 L19 14 L11 19Z" fill="#ccc"/><text x="14" y="11" font-size="9" font-weight="bold" text-anchor="middle" fill="#eee" font-family="Liberation Sans">12</text></svg>
<svg class="a" style="left:1060px;top:609px" width="22" height="22" viewBox="0 0 22 22"><path d="M4 19 V4 H18" fill="none" stroke="#ddd" stroke-width="1.2"/><path d="M4 19 C4 10,10 4,18 4" fill="none" stroke="#ddd" stroke-width="1"/><circle cx="4" cy="19" r="1.5" fill="#fff"/><circle cx="18" cy="4" r="1.5" fill="#fff"/></svg>
<svg class="a" style="left:1060px;top:635px" width="22" height="22" viewBox="0 0 22 22"><rect x="5" y="5" width="12" height="12" fill="#777"/><path d="M5 11 H17 M11 5 V17" stroke="#aaa" stroke-width="2"/><circle cx="4" cy="4" r="2" fill="#eee"/><circle cx="18" cy="4" r="2" fill="#eee"/><circle cx="4" cy="18" r="2" fill="#eee"/><circle cx="18" cy="18" r="2" fill="#eee"/></svg>
<svg class="a" style="left:1060px;top:660px" width="22" height="22" viewBox="0 0 22 22"><path d="M2 11 H9 M11 11 L16 4 M11 11 L16 18" stroke="#ddd" stroke-width="1.3"/><circle cx="11" cy="11" r="2.5" fill="#eee"/></svg>
<svg class="a" style="left:1060px;top:685px" width="22" height="22" viewBox="0 0 22 22"><circle cx="11" cy="11" r="8" fill="none" stroke="#999" stroke-width="1.2"/><rect x="6" y="7" width="10" height="8" rx="1" fill="#ddd"/><path d="M6 11 H16" stroke="#555"/></svg>
<div class="t" style="left:1061.5px;top:715.7px;font-size:11px;color:#e0e0e0;transform:scaleX(1.071);transform-origin:0 0;">abc</div>
<div class="a" style="left:1060px;top:735px;width:23px;height:24px;background:#c08a2a;border:1px solid #6a4a10"></div><svg class="a" style="left:1060px;top:736px" width="22" height="22" viewBox="0 0 22 22"><rect x="4" y="5" width="14" height="12" fill="#ddd" stroke="#444"/><path d="M5 14 L9 9 L12 12 L15 8 L17 10 V16 H5Z" fill="#666"/></svg>
<div class="a" style="left:1059px;top:765px;width:25px;height:1px;background:#2c2c2c;"></div>
<div class="a" style="left:1060px;top:771px;width:23px;height:24px;background:#c08a2a;border:1px solid #6a4a10"></div><svg class="a" style="left:1060px;top:772px" width="22" height="22" viewBox="0 0 22 22"><path d="M11 20 L5 10 C3 3,19 3,17 10Z" fill="#eee" stroke="#888" stroke-width="0.6"/><circle cx="11" cy="9" r="2.5" fill="#888"/></svg>
<div class="a" style="left:1059px;top:935px;width:25px;height:1px;background:#2c2c2c;"></div>
<svg class="a" style="left:1060px;top:939px" width="22" height="22" viewBox="0 0 22 22"><circle cx="11" cy="11" r="8" fill="#333" stroke="#ddd" stroke-width="1.3"/><text x="11" y="15.5" font-size="11" font-style="italic" font-weight="bold" text-anchor="middle" fill="#eee" font-family="Liberation Serif">i</text></svg>
<div class="a" style="left:1060px;top:965px;width:23px;height:24px;background:#c08a2a;border:1px solid #6a4a10"></div><svg class="a" style="left:1060px;top:966px" width="22" height="22" viewBox="0 0 22 22"><rect x="5" y="5" width="5" height="5" fill="#f8f0c0"/><rect x="12" y="5" width="5" height="5" fill="#f8f0c0"/><rect x="5" y="12" width="5" height="5" fill="#f8f0c0"/><rect x="12" y="12" width="5" height="5" fill="#f8f0c0"/></svg>
<svg class="a" style="left:1060px;top:991px" width="22" height="22" viewBox="0 0 22 22"><rect x="4" y="4" width="14" height="14" fill="#eee"/><rect x="4" y="4" width="14" height="2" fill="#999"/><path d="M5 11 C8 6,14 6,17 11 C14 15,8 15,5 11Z" fill="#fff" stroke="#222" stroke-width="1.2"/><circle cx="11" cy="11" r="2.5" fill="#000"/><path d="M17 14 L21 18 L17 22Z" fill="#999"/></svg>
</body></html>
